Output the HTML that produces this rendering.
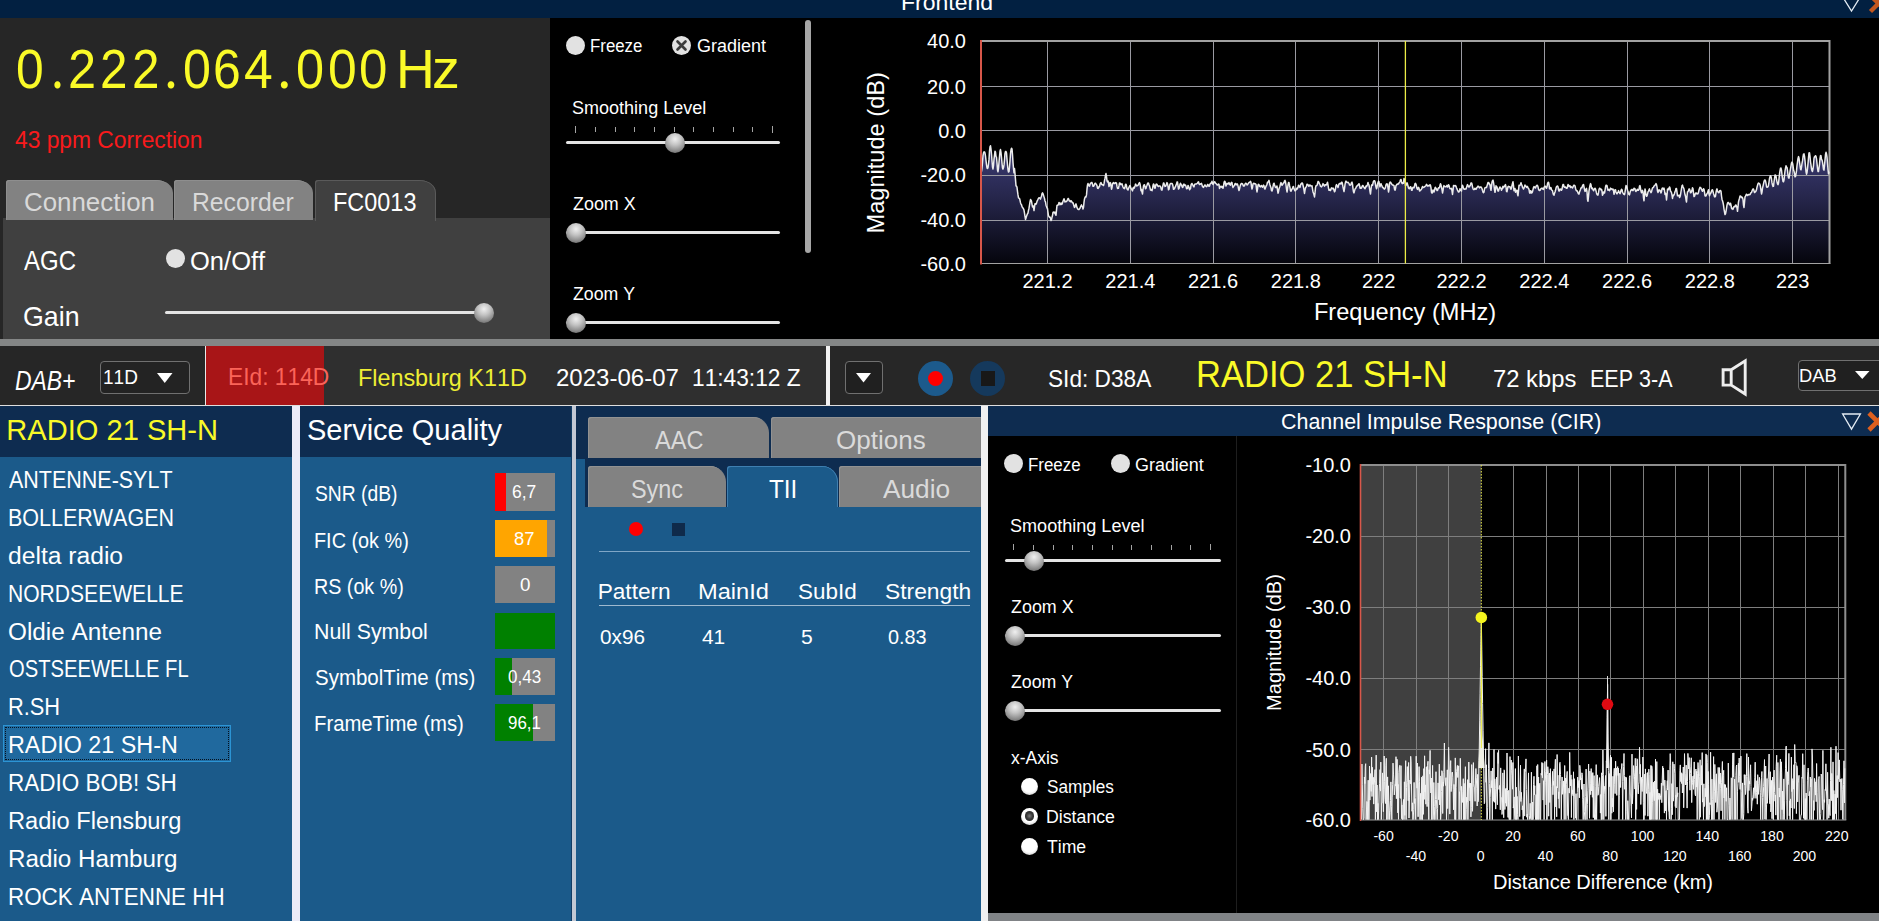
<!DOCTYPE html>
<html lang="en"><head><meta charset="utf-8"><title>DAB+ Receiver</title>
<style>
html,body{margin:0;padding:0;background:#000;}
body{width:1879px;height:921px;overflow:hidden;position:relative;font-family:"Liberation Sans",sans-serif;font-kerning:none;}
#app{position:absolute;left:0;top:0;width:1879px;height:921px;overflow:hidden;background:#000;}
.b{position:absolute;display:block;}
.t{position:absolute;line-height:1;white-space:pre;transform-origin:0 0;font-kerning:none;}
svg text{font-family:"Liberation Sans",sans-serif;font-kerning:none;}
</style></head>
<body><div id="app">
<div class="b " style="left:0.00px;top:0.00px;width:1879.00px;height:18.00px;background:#022041;"></div>
<span class="t " style="left:900.61px;top:-8.00px;font-size:21.80px;color:#fff;transform:scaleX(1.0557);">Frontend</span>
<svg class="b" style="left:1835px;top:0;width:44px;height:18px" viewBox="1835 0 44 18"><polyline points="1844.3,-0.5 1851.5,11 1858.7,-0.5" fill="none" stroke="#e4ecf4" stroke-width="1.3"/><path d="M1869.5,-5.5 L1885.5,10.5 M1870.5,11.5 L1886.5,-4.5" stroke="#c4571f" stroke-width="4.4" fill="none"/></svg>
<div class="b " style="left:0.00px;top:18.00px;width:550.00px;height:321.00px;background:#262626;"></div>
<div class="freq">
<span class="t " style="left:15.56px;top:42.00px;font-size:55.00px;color:#fafa28;transform:scaleX(0.9052);">0</span>
<span class="t " style="left:50.80px;top:37.00px;font-size:61.00px;color:#fafa28;transform:scaleX(0.8463);font-family:'Liberation Serif',serif;">.</span>
<span class="t " style="left:68.46px;top:42.00px;font-size:55.00px;color:#fafa28;transform:scaleX(0.9179);">2</span>
<span class="t " style="left:100.02px;top:42.00px;font-size:55.00px;color:#fafa28;transform:scaleX(0.8980);">2</span>
<span class="t " style="left:131.52px;top:42.00px;font-size:55.00px;color:#fafa28;transform:scaleX(0.8980);">2</span>
<span class="t " style="left:164.02px;top:37.00px;font-size:61.00px;color:#fafa28;transform:scaleX(0.9156);font-family:'Liberation Serif',serif;">.</span>
<span class="t " style="left:183.04px;top:42.00px;font-size:55.00px;color:#fafa28;transform:scaleX(0.9128);">0</span>
<span class="t " style="left:213.47px;top:42.00px;font-size:55.00px;color:#fafa28;transform:scaleX(0.9063);">6</span>
<span class="t " style="left:243.82px;top:42.00px;font-size:55.00px;color:#fafa28;transform:scaleX(0.9381);">4</span>
<span class="t " style="left:277.05px;top:37.00px;font-size:61.00px;color:#fafa28;transform:scaleX(0.9573);font-family:'Liberation Serif',serif;">.</span>
<span class="t " style="left:296.23px;top:42.00px;font-size:55.00px;color:#fafa28;transform:scaleX(0.9166);">0</span>
<span class="t " style="left:328.18px;top:42.00px;font-size:55.00px;color:#fafa28;transform:scaleX(0.9395);">0</span>
<span class="t " style="left:359.41px;top:42.00px;font-size:55.00px;color:#fafa28;transform:scaleX(0.9281);">0</span>
<span class="t " style="left:396.09px;top:42.00px;font-size:55.00px;color:#fafa28;transform:scaleX(0.9765);">H</span>
<span class="t " style="left:432.14px;top:42.00px;font-size:55.00px;color:#fafa28;transform:scaleX(1.0119);">z</span>
</div>
<span class="t " style="left:14.98px;top:129.00px;font-size:23.26px;color:#f81a1c;transform:scaleX(0.9801);">43 ppm Correction</span>
<div class="b " style="left:3.00px;top:218.00px;width:547.00px;height:121.00px;background:#404040;"></div>
<div class="b " style="left:6.00px;top:179.50px;width:166.50px;height:40.50px;background:#828282;border-radius:3px 17px 0 0 / 3px 13px 0 0;box-shadow:inset 1px 1px 0 #8e8e8e;"></div>
<div class="b " style="left:174.00px;top:179.50px;width:138.50px;height:40.50px;background:#828282;border-radius:3px 17px 0 0 / 3px 13px 0 0;box-shadow:inset 1px 1px 0 #8e8e8e;"></div>
<div class="b " style="left:314.50px;top:179.50px;width:121.00px;height:41.50px;background:#404040;border-radius:3px 17px 0 0 / 3px 13px 0 0;box-shadow:inset 1px 1px 0 #5a5a5a, inset -1px 0 0 #5a5a5a;"></div>
<span class="t " style="left:24.44px;top:190.00px;font-size:25.07px;color:#d9d9d9;transform:scaleX(1.0327);">Connection</span>
<span class="t " style="left:192.47px;top:190.00px;font-size:25.07px;color:#d9d9d9;transform:scaleX(0.9861);">Recorder</span>
<span class="t " style="left:332.58px;top:190.00px;font-size:25.07px;color:#fff;transform:scaleX(0.9356);">FC0013</span>
<span class="t " style="left:23.95px;top:246.00px;font-size:28.34px;color:#fff;transform:scaleX(0.8460);">AGC</span>
<div class="b " style="left:165.50px;top:249.25px;width:19.00px;height:19.00px;background:#e2e2e2;border-radius:50%;"></div>
<span class="t " style="left:189.79px;top:249.00px;font-size:25.44px;color:#fff;transform:scaleX(1.0034);">On/Off</span>
<span class="t " style="left:22.65px;top:304.00px;font-size:26.89px;color:#fff;transform:scaleX(0.9963);">Gain</span>
<div class="b " style="left:165.00px;top:310.80px;width:321.00px;height:3.00px;background:#e4e4e4;border-radius:2px;"></div>
<div class="b " style="left:474.30px;top:302.60px;width:20.00px;height:20.00px;background:radial-gradient(circle at 50% 30%, #f0f0f0 0%, #c4c4c4 35%, #8a8a8a 70%, #555 100%);border-radius:50%;"></div>
<div class="b " style="left:566.00px;top:35.50px;width:19.00px;height:19.00px;background:#e2e2e2;border-radius:50%;"></div>
<span class="t " style="left:590.37px;top:37.00px;font-size:18.90px;color:#fff;transform:scaleX(0.8907);">Freeze</span>
<div class="b " style="left:672.25px;top:35.50px;width:19.00px;height:19.00px;background:#e2e2e2;border-radius:50%;"><svg viewBox="-10 -10 20 20" style="position:absolute;left:0;top:0;width:100%;height:100%"><path d="M-4.2,-4.2 L4.2,4.2 M4.2,-4.2 L-4.2,4.2" stroke="#3c3c3c" stroke-width="2.8" stroke-linecap="round"/></svg></div>
<span class="t " style="left:697.34px;top:37.00px;font-size:18.90px;color:#fff;transform:scaleX(0.9526);">Gradient</span>
<span class="t " style="left:572.43px;top:99.00px;font-size:18.90px;color:#fff;transform:scaleX(0.9540);">Smoothing Level</span>
<div class="b " style="left:575.00px;top:126.00px;width:1.00px;height:7.00px;background:#a4a4a4;"></div>
<div class="b " style="left:595.00px;top:127.00px;width:1.00px;height:5.00px;background:#a4a4a4;"></div>
<div class="b " style="left:615.00px;top:127.00px;width:1.00px;height:5.00px;background:#a4a4a4;"></div>
<div class="b " style="left:634.00px;top:127.00px;width:1.00px;height:5.00px;background:#a4a4a4;"></div>
<div class="b " style="left:654.00px;top:127.00px;width:1.00px;height:5.00px;background:#a4a4a4;"></div>
<div class="b " style="left:674.00px;top:127.00px;width:1.00px;height:5.00px;background:#a4a4a4;"></div>
<div class="b " style="left:693.00px;top:127.00px;width:1.00px;height:5.00px;background:#a4a4a4;"></div>
<div class="b " style="left:713.00px;top:127.00px;width:1.00px;height:5.00px;background:#a4a4a4;"></div>
<div class="b " style="left:733.00px;top:127.00px;width:1.00px;height:5.00px;background:#a4a4a4;"></div>
<div class="b " style="left:752.00px;top:127.00px;width:1.00px;height:5.00px;background:#a4a4a4;"></div>
<div class="b " style="left:772.00px;top:126.00px;width:1.00px;height:7.00px;background:#a4a4a4;"></div>
<div class="b " style="left:566.25px;top:141.00px;width:213.25px;height:3.00px;background:#e4e4e4;border-radius:2px;"></div>
<div class="b " style="left:664.50px;top:132.80px;width:20.00px;height:20.00px;background:radial-gradient(circle at 50% 30%, #f0f0f0 0%, #c4c4c4 35%, #8a8a8a 70%, #555 100%);border-radius:50%;"></div>
<span class="t " style="left:572.68px;top:195.00px;font-size:18.90px;color:#fff;transform:scaleX(0.9477);">Zoom X</span>
<div class="b " style="left:566.25px;top:231.00px;width:213.25px;height:3.00px;background:#e4e4e4;border-radius:2px;"></div>
<div class="b " style="left:566.30px;top:222.80px;width:20.00px;height:20.00px;background:radial-gradient(circle at 50% 30%, #f0f0f0 0%, #c4c4c4 35%, #8a8a8a 70%, #555 100%);border-radius:50%;"></div>
<span class="t " style="left:572.69px;top:285.00px;font-size:18.90px;color:#fff;transform:scaleX(0.9388);">Zoom Y</span>
<div class="b " style="left:566.25px;top:321.00px;width:213.25px;height:3.00px;background:#e4e4e4;border-radius:2px;"></div>
<div class="b " style="left:566.30px;top:312.80px;width:20.00px;height:20.00px;background:radial-gradient(circle at 50% 30%, #f0f0f0 0%, #c4c4c4 35%, #8a8a8a 70%, #555 100%);border-radius:50%;"></div>
<div class="b " style="left:804.50px;top:20.00px;width:6.25px;height:233.00px;background:#a6a6a6;border-radius:3px;"></div>
<svg class="b plot" style="left:815px;top:18px;width:1064px;height:321px" viewBox="815 18 1064 321">
<defs><linearGradient id="sg" gradientUnits="userSpaceOnUse" x1="0" y1="150" x2="0" y2="264"><stop offset="0" stop-color="#3c3c74"/><stop offset="0.45" stop-color="#242448"/><stop offset="1" stop-color="#05050c"/></linearGradient></defs>
<polygon points="981,263.5 981.5,171.7 982.0,168.2 982.5,162.3 983.0,155.7 983.5,152.9 984.0,151.8 984.5,151.9 985.0,153.0 985.5,156.0 986.0,160.7 986.5,164.6 987.0,167.9 987.5,168.5 988.0,167.7 988.5,164.0 989.0,159.4 989.5,151.0 990.0,146.9 990.5,145.8 991.0,149.2 991.5,154.3 992.0,160.8 992.5,167.0 993.0,169.0 993.5,165.7 994.0,159.2 994.5,155.1 995.0,151.2 995.5,152.2 996.0,156.6 996.5,157.3 997.0,163.0 997.5,170.1 998.0,171.7 998.5,168.1 999.0,162.3 999.5,156.6 1000.0,151.3 1000.5,149.5 1001.0,152.7 1001.5,157.5 1002.0,163.2 1002.5,168.0 1003.0,169.1 1003.5,167.6 1004.0,164.9 1004.5,159.9 1005.0,153.4 1005.5,151.5 1006.0,151.4 1006.5,152.9 1007.0,159.4 1007.5,164.8 1008.0,169.8 1008.5,172.0 1009.0,171.6 1009.5,167.3 1010.0,161.0 1010.5,153.7 1011.0,149.8 1011.5,148.3 1012.0,148.9 1012.5,154.9 1013.0,162.6 1013.5,168.5 1014.0,172.8 1014.5,168.6 1015.0,173.7 1015.5,179.6 1016.0,185.9 1016.5,185.9 1017.0,187.3 1017.5,191.4 1018.0,194.9 1018.5,197.9 1019.0,198.2 1019.5,198.4 1020.0,200.3 1020.5,202.7 1021.0,204.1 1021.5,204.8 1022.0,206.6 1022.5,207.5 1023.0,208.1 1023.5,208.9 1024.0,210.1 1024.5,213.2 1025.0,216.5 1025.5,219.4 1026.0,217.9 1026.5,216.3 1027.0,214.9 1027.5,213.7 1028.0,213.0 1028.5,210.2 1029.0,208.2 1029.5,205.0 1030.0,201.8 1030.5,199.6 1031.0,200.2 1031.5,201.2 1032.0,204.3 1032.5,206.9 1033.0,205.8 1033.5,207.2 1034.0,210.6 1034.5,207.0 1035.0,203.7 1035.5,203.7 1036.0,204.2 1036.5,203.2 1037.0,201.4 1037.5,200.3 1038.0,199.3 1038.5,198.2 1039.0,197.7 1039.5,198.0 1040.0,198.3 1040.5,199.1 1041.0,197.4 1041.5,196.4 1042.0,193.6 1042.5,192.8 1043.0,193.6 1043.5,195.3 1044.0,196.9 1044.5,198.5 1045.0,201.0 1045.5,201.9 1046.0,205.2 1046.5,206.5 1047.0,208.0 1047.5,208.6 1048.0,212.4 1048.5,215.8 1049.0,216.5 1049.5,217.2 1050.0,217.0 1050.5,218.3 1051.0,220.5 1051.5,219.7 1052.0,217.3 1052.5,215.5 1053.0,212.4 1053.5,212.0 1054.0,212.2 1054.5,213.0 1055.0,212.1 1055.5,214.7 1056.0,215.2 1056.5,210.1 1057.0,205.4 1057.5,205.2 1058.0,205.2 1058.5,203.9 1059.0,202.5 1059.5,203.0 1060.0,204.7 1060.5,204.2 1061.0,202.9 1061.5,204.4 1062.0,204.1 1062.5,202.9 1063.0,201.3 1063.5,199.9 1064.0,198.8 1064.5,200.4 1065.0,201.9 1065.5,201.5 1066.0,201.8 1066.5,201.2 1067.0,201.1 1067.5,199.8 1068.0,198.6 1068.5,198.6 1069.0,200.2 1069.5,201.1 1070.0,201.0 1070.5,201.7 1071.0,200.6 1071.5,201.3 1072.0,202.1 1072.5,202.7 1073.0,202.8 1073.5,204.4 1074.0,206.0 1074.5,207.4 1075.0,206.8 1075.5,204.9 1076.0,203.9 1076.5,205.7 1077.0,207.7 1077.5,208.3 1078.0,209.4 1078.5,209.6 1079.0,209.6 1079.5,208.9 1080.0,208.2 1080.5,206.8 1081.0,205.8 1081.5,204.9 1082.0,206.3 1082.5,206.9 1083.0,209.0 1083.5,207.3 1084.0,202.4 1084.5,198.9 1085.0,197.5 1085.5,196.7 1086.0,196.9 1086.5,194.9 1087.0,189.2 1087.5,184.9 1088.0,183.4 1088.5,184.9 1089.0,185.9 1089.5,186.2 1090.0,184.5 1090.5,183.2 1091.0,183.1 1091.5,182.5 1092.0,182.6 1092.5,184.4 1093.0,186.3 1093.5,186.3 1094.0,185.8 1094.5,184.1 1095.0,183.3 1095.5,183.2 1096.0,184.0 1096.5,184.7 1097.0,185.7 1097.5,188.2 1098.0,188.4 1098.5,187.9 1099.0,186.5 1099.5,186.7 1100.0,184.1 1100.5,183.0 1101.0,182.6 1101.5,184.1 1102.0,184.6 1102.5,184.6 1103.0,185.2 1103.5,185.5 1104.0,183.9 1104.5,180.7 1105.0,178.4 1105.5,175.4 1106.0,173.5 1106.5,176.7 1107.0,180.8 1107.5,182.0 1108.0,181.0 1108.5,183.2 1109.0,186.6 1109.5,185.2 1110.0,182.6 1110.5,182.9 1111.0,185.6 1111.5,189.2 1112.0,187.5 1112.5,184.0 1113.0,183.2 1113.5,182.5 1114.0,183.5 1114.5,183.3 1115.0,183.4 1115.5,182.6 1116.0,182.8 1116.5,183.2 1117.0,186.4 1117.5,188.4 1118.0,187.9 1118.5,188.1 1119.0,185.7 1119.5,183.0 1120.0,183.1 1120.5,184.6 1121.0,184.1 1121.5,184.4 1122.0,183.9 1122.5,185.5 1123.0,187.0 1123.5,188.0 1124.0,188.4 1124.5,188.7 1125.0,187.3 1125.5,184.4 1126.0,184.2 1126.5,185.8 1127.0,188.9 1127.5,189.6 1128.0,190.0 1128.5,188.5 1129.0,187.3 1129.5,186.2 1130.0,185.6 1130.5,186.8 1131.0,188.5 1131.5,189.0 1132.0,190.0 1132.5,190.9 1133.0,188.2 1133.5,187.4 1134.0,188.4 1134.5,187.5 1135.0,185.9 1135.5,184.1 1136.0,184.7 1136.5,185.9 1137.0,185.9 1137.5,185.5 1138.0,185.6 1138.5,184.3 1139.0,183.3 1139.5,182.6 1140.0,183.9 1140.5,186.9 1141.0,190.7 1141.5,189.5 1142.0,192.1 1142.5,194.0 1143.0,189.5 1143.5,185.9 1144.0,184.9 1144.5,184.7 1145.0,186.8 1145.5,188.8 1146.0,188.3 1146.5,186.3 1147.0,185.2 1147.5,183.7 1148.0,182.9 1148.5,183.1 1149.0,184.8 1149.5,185.9 1150.0,187.8 1150.5,190.1 1151.0,189.4 1151.5,190.4 1152.0,190.6 1152.5,188.7 1153.0,185.5 1153.5,183.9 1154.0,184.6 1154.5,187.7 1155.0,188.3 1155.5,186.5 1156.0,184.4 1156.5,184.0 1157.0,184.4 1157.5,185.5 1158.0,186.2 1158.5,186.5 1159.0,186.0 1159.5,186.0 1160.0,186.1 1160.5,186.4 1161.0,188.2 1161.5,190.0 1162.0,190.1 1162.5,187.4 1163.0,185.2 1163.5,182.9 1164.0,183.4 1164.5,185.0 1165.0,186.4 1165.5,186.2 1166.0,185.5 1166.5,183.9 1167.0,182.6 1167.5,183.5 1168.0,186.5 1168.5,189.8 1169.0,189.3 1169.5,186.3 1170.0,184.3 1170.5,183.6 1171.0,183.5 1171.5,183.5 1172.0,183.4 1172.5,184.3 1173.0,186.3 1173.5,189.3 1174.0,189.1 1174.5,188.7 1175.0,187.3 1175.5,186.5 1176.0,185.1 1176.5,184.1 1177.0,182.1 1177.5,182.0 1178.0,185.6 1178.5,189.1 1179.0,188.5 1179.5,186.8 1180.0,184.4 1180.5,183.2 1181.0,184.6 1181.5,185.1 1182.0,186.5 1182.5,187.5 1183.0,186.9 1183.5,184.4 1184.0,184.1 1184.5,185.4 1185.0,185.2 1185.5,185.0 1186.0,186.4 1186.5,188.7 1187.0,188.7 1187.5,188.3 1188.0,185.4 1188.5,186.2 1189.0,187.6 1189.5,189.7 1190.0,189.0 1190.5,188.7 1191.0,185.1 1191.5,183.8 1192.0,183.5 1192.5,184.8 1193.0,185.3 1193.5,186.5 1194.0,186.9 1194.5,184.7 1195.0,184.1 1195.5,183.9 1196.0,183.9 1196.5,183.9 1197.0,183.5 1197.5,183.1 1198.0,182.1 1198.5,181.8 1199.0,183.7 1199.5,184.6 1200.0,184.4 1200.5,183.9 1201.0,183.6 1201.5,183.4 1202.0,184.9 1202.5,186.6 1203.0,187.0 1203.5,187.4 1204.0,186.1 1204.5,185.8 1205.0,184.9 1205.5,185.7 1206.0,186.4 1206.5,186.7 1207.0,186.2 1207.5,184.6 1208.0,184.5 1208.5,185.8 1209.0,186.2 1209.5,186.0 1210.0,184.0 1210.5,183.6 1211.0,183.1 1211.5,182.7 1212.0,181.3 1212.5,183.5 1213.0,184.5 1213.5,183.6 1214.0,182.3 1214.5,181.8 1215.0,181.9 1215.5,183.2 1216.0,183.6 1216.5,183.9 1217.0,184.8 1217.5,185.1 1218.0,184.9 1218.5,184.0 1219.0,184.4 1219.5,188.4 1220.0,187.5 1220.5,186.5 1221.0,186.3 1221.5,187.1 1222.0,186.3 1222.5,187.8 1223.0,188.3 1223.5,186.3 1224.0,182.8 1224.5,181.3 1225.0,181.4 1225.5,184.2 1226.0,186.1 1226.5,184.6 1227.0,183.2 1227.5,184.1 1228.0,183.9 1228.5,183.3 1229.0,182.6 1229.5,184.5 1230.0,184.1 1230.5,185.2 1231.0,183.1 1231.5,182.3 1232.0,182.6 1232.5,186.0 1233.0,187.5 1233.5,186.5 1234.0,185.9 1234.5,185.5 1235.0,183.6 1235.5,183.4 1236.0,184.5 1236.5,184.7 1237.0,184.0 1237.5,184.1 1238.0,185.9 1238.5,188.7 1239.0,190.6 1239.5,189.0 1240.0,186.6 1240.5,185.1 1241.0,183.8 1241.5,183.5 1242.0,183.5 1242.5,183.9 1243.0,184.9 1243.5,186.1 1244.0,186.0 1244.5,185.8 1245.0,184.1 1245.5,183.3 1246.0,183.2 1246.5,183.9 1247.0,184.9 1247.5,184.8 1248.0,183.9 1248.5,183.2 1249.0,182.6 1249.5,182.2 1250.0,182.1 1250.5,181.4 1251.0,182.6 1251.5,186.7 1252.0,189.1 1252.5,187.2 1253.0,184.0 1253.5,183.4 1254.0,183.2 1254.5,183.9 1255.0,183.7 1255.5,184.0 1256.0,184.4 1256.5,188.9 1257.0,191.9 1257.5,189.1 1258.0,184.9 1258.5,184.3 1259.0,184.6 1259.5,186.3 1260.0,186.6 1260.5,186.9 1261.0,185.7 1261.5,185.5 1262.0,186.6 1262.5,187.2 1263.0,186.2 1263.5,185.1 1264.0,185.8 1264.5,188.3 1265.0,189.1 1265.5,187.8 1266.0,186.1 1266.5,185.6 1267.0,184.2 1267.5,182.2 1268.0,182.0 1268.5,181.4 1269.0,180.4 1269.5,183.1 1270.0,185.0 1270.5,186.4 1271.0,187.8 1271.5,190.6 1272.0,191.0 1272.5,189.5 1273.0,186.6 1273.5,183.9 1274.0,183.2 1274.5,184.8 1275.0,186.2 1275.5,187.5 1276.0,187.6 1276.5,186.6 1277.0,186.1 1277.5,189.8 1278.0,193.2 1278.5,191.7 1279.0,188.8 1279.5,187.5 1280.0,186.2 1280.5,183.8 1281.0,182.6 1281.5,183.8 1282.0,185.3 1282.5,184.7 1283.0,183.9 1283.5,182.7 1284.0,182.8 1284.5,181.0 1285.0,180.4 1285.5,181.8 1286.0,185.0 1286.5,189.0 1287.0,192.0 1287.5,189.3 1288.0,184.8 1288.5,182.6 1289.0,182.6 1289.5,185.4 1290.0,187.6 1290.5,190.8 1291.0,191.3 1291.5,190.0 1292.0,189.2 1292.5,188.0 1293.0,186.7 1293.5,186.6 1294.0,188.8 1294.5,189.9 1295.0,190.8 1295.5,190.8 1296.0,189.6 1296.5,188.2 1297.0,189.2 1297.5,188.5 1298.0,187.3 1298.5,185.2 1299.0,186.0 1299.5,187.0 1300.0,187.4 1300.5,185.1 1301.0,183.8 1301.5,184.0 1302.0,182.9 1302.5,183.3 1303.0,185.3 1303.5,187.2 1304.0,190.1 1304.5,193.5 1305.0,190.2 1305.5,187.9 1306.0,187.1 1306.5,186.0 1307.0,184.2 1307.5,184.4 1308.0,184.7 1308.5,185.9 1309.0,186.3 1309.5,185.2 1310.0,185.0 1310.5,185.7 1311.0,186.0 1311.5,185.9 1312.0,185.8 1312.5,188.8 1313.0,192.0 1313.5,193.1 1314.0,194.9 1314.5,196.9 1315.0,192.9 1315.5,187.6 1316.0,185.7 1316.5,185.7 1317.0,185.4 1317.5,183.8 1318.0,181.6 1318.5,181.5 1319.0,182.6 1319.5,183.9 1320.0,184.6 1320.5,186.3 1321.0,186.5 1321.5,186.9 1322.0,186.1 1322.5,185.2 1323.0,183.6 1323.5,184.4 1324.0,185.4 1324.5,186.2 1325.0,184.9 1325.5,184.7 1326.0,185.1 1326.5,184.9 1327.0,183.5 1327.5,182.2 1328.0,184.9 1328.5,188.4 1329.0,190.3 1329.5,189.5 1330.0,190.4 1330.5,190.4 1331.0,188.9 1331.5,187.9 1332.0,188.5 1332.5,188.7 1333.0,188.1 1333.5,188.7 1334.0,190.2 1334.5,191.8 1335.0,191.1 1335.5,188.6 1336.0,185.7 1336.5,184.6 1337.0,185.8 1337.5,186.3 1338.0,187.6 1338.5,185.5 1339.0,184.0 1339.5,183.5 1340.0,183.8 1340.5,183.4 1341.0,184.0 1341.5,182.2 1342.0,182.3 1342.5,184.0 1343.0,187.1 1343.5,189.3 1344.0,191.5 1344.5,188.6 1345.0,184.7 1345.5,182.1 1346.0,181.1 1346.5,181.9 1347.0,182.5 1347.5,182.4 1348.0,182.2 1348.5,183.0 1349.0,183.4 1349.5,185.1 1350.0,184.8 1350.5,185.1 1351.0,184.3 1351.5,182.8 1352.0,182.1 1352.5,184.1 1353.0,188.6 1353.5,191.9 1354.0,192.9 1354.5,190.9 1355.0,189.1 1355.5,188.3 1356.0,187.9 1356.5,186.3 1357.0,186.2 1357.5,185.3 1358.0,185.2 1358.5,184.3 1359.0,183.7 1359.5,185.2 1360.0,188.0 1360.5,188.3 1361.0,187.5 1361.5,188.1 1362.0,186.8 1362.5,185.5 1363.0,185.5 1363.5,186.8 1364.0,187.2 1364.5,188.3 1365.0,188.7 1365.5,187.6 1366.0,185.9 1366.5,186.7 1367.0,185.7 1367.5,184.5 1368.0,182.5 1368.5,184.0 1369.0,185.2 1369.5,188.2 1370.0,191.5 1370.5,194.0 1371.0,189.4 1371.5,185.7 1372.0,184.7 1372.5,185.3 1373.0,183.2 1373.5,181.3 1374.0,180.8 1374.5,180.7 1375.0,181.7 1375.5,184.5 1376.0,187.0 1376.5,188.7 1377.0,187.4 1377.5,184.2 1378.0,182.5 1378.5,181.3 1379.0,181.8 1379.5,185.3 1380.0,186.9 1380.5,184.3 1381.0,183.7 1381.5,185.3 1382.0,186.0 1382.5,187.4 1383.0,187.3 1383.5,188.2 1384.0,188.8 1384.5,189.1 1385.0,188.5 1385.5,187.0 1386.0,184.8 1386.5,183.9 1387.0,184.6 1387.5,184.1 1388.0,188.0 1388.5,192.0 1389.0,189.5 1389.5,183.6 1390.0,182.3 1390.5,182.1 1391.0,183.0 1391.5,183.8 1392.0,184.4 1392.5,185.0 1393.0,185.0 1393.5,185.3 1394.0,185.7 1394.5,189.1 1395.0,190.2 1395.5,188.7 1396.0,185.6 1396.5,185.2 1397.0,184.2 1397.5,184.2 1398.0,183.7 1398.5,184.0 1399.0,182.8 1399.5,182.5 1400.0,181.5 1400.5,179.8 1401.0,179.5 1401.5,181.5 1402.0,183.3 1402.5,183.6 1403.0,182.6 1403.5,183.2 1404.0,178.5 1404.5,179.7 1405.0,179.4 1405.5,185.8 1406.0,185.4 1406.5,184.5 1407.0,182.8 1407.5,184.1 1408.0,186.0 1408.5,188.2 1409.0,188.5 1409.5,188.7 1410.0,187.3 1410.5,186.7 1411.0,187.3 1411.5,190.2 1412.0,190.2 1412.5,188.2 1413.0,187.3 1413.5,187.4 1414.0,187.8 1414.5,186.1 1415.0,183.7 1415.5,183.4 1416.0,184.3 1416.5,186.3 1417.0,188.5 1417.5,189.4 1418.0,188.1 1418.5,187.3 1419.0,188.2 1419.5,190.9 1420.0,190.8 1420.5,189.9 1421.0,189.9 1421.5,189.1 1422.0,187.7 1422.5,186.5 1423.0,187.6 1423.5,187.2 1424.0,187.3 1424.5,186.7 1425.0,186.5 1425.5,186.0 1426.0,185.4 1426.5,184.4 1427.0,185.2 1427.5,186.0 1428.0,185.5 1428.5,185.7 1429.0,186.0 1429.5,185.3 1430.0,184.7 1430.5,185.5 1431.0,187.9 1431.5,192.4 1432.0,193.1 1432.5,192.0 1433.0,190.0 1433.5,190.5 1434.0,192.0 1434.5,190.3 1435.0,187.8 1435.5,187.3 1436.0,188.9 1436.5,188.8 1437.0,190.6 1437.5,190.5 1438.0,189.1 1438.5,187.7 1439.0,188.0 1439.5,187.7 1440.0,185.3 1440.5,183.7 1441.0,185.1 1441.5,187.3 1442.0,189.7 1442.5,193.0 1443.0,190.6 1443.5,187.1 1444.0,185.6 1444.5,186.4 1445.0,186.4 1445.5,186.8 1446.0,186.7 1446.5,186.3 1447.0,185.3 1447.5,187.0 1448.0,186.4 1448.5,184.8 1449.0,185.5 1449.5,187.5 1450.0,188.7 1450.5,188.7 1451.0,188.6 1451.5,188.3 1452.0,190.9 1452.5,194.4 1453.0,190.4 1453.5,185.5 1454.0,185.5 1454.5,185.8 1455.0,185.9 1455.5,185.5 1456.0,186.3 1456.5,187.7 1457.0,188.9 1457.5,190.1 1458.0,191.2 1458.5,192.1 1459.0,191.9 1459.5,190.7 1460.0,188.7 1460.5,189.6 1461.0,190.7 1461.5,191.0 1462.0,187.1 1462.5,185.3 1463.0,186.5 1463.5,188.0 1464.0,189.3 1464.5,189.3 1465.0,189.0 1465.5,188.9 1466.0,189.0 1466.5,187.5 1467.0,186.0 1467.5,184.6 1468.0,186.0 1468.5,186.1 1469.0,187.1 1469.5,185.9 1470.0,186.0 1470.5,184.8 1471.0,183.0 1471.5,182.9 1472.0,184.0 1472.5,187.0 1473.0,188.5 1473.5,189.6 1474.0,189.6 1474.5,189.1 1475.0,188.2 1475.5,189.3 1476.0,189.3 1476.5,188.5 1477.0,187.3 1477.5,187.0 1478.0,186.1 1478.5,186.6 1479.0,187.1 1479.5,187.9 1480.0,187.1 1480.5,187.2 1481.0,187.0 1481.5,187.7 1482.0,188.6 1482.5,190.5 1483.0,192.1 1483.5,192.6 1484.0,192.2 1484.5,189.0 1485.0,187.7 1485.5,187.5 1486.0,187.5 1486.5,187.5 1487.0,185.9 1487.5,184.2 1488.0,182.5 1488.5,182.5 1489.0,183.0 1489.5,184.6 1490.0,184.3 1490.5,188.3 1491.0,190.3 1491.5,186.3 1492.0,182.0 1492.5,180.8 1493.0,180.1 1493.5,182.5 1494.0,185.6 1494.5,189.9 1495.0,192.3 1495.5,189.5 1496.0,185.7 1496.5,186.8 1497.0,187.0 1497.5,189.6 1498.0,191.0 1498.5,191.0 1499.0,189.0 1499.5,187.8 1500.0,187.0 1500.5,188.1 1501.0,188.4 1501.5,190.2 1502.0,189.2 1502.5,187.5 1503.0,186.2 1503.5,187.7 1504.0,186.7 1504.5,186.3 1505.0,185.3 1505.5,184.6 1506.0,187.1 1506.5,191.3 1507.0,191.7 1507.5,189.0 1508.0,186.6 1508.5,186.3 1509.0,186.8 1509.5,186.8 1510.0,186.7 1510.5,188.6 1511.0,189.2 1511.5,188.0 1512.0,185.5 1512.5,183.5 1513.0,181.8 1513.5,185.7 1514.0,190.7 1514.5,189.8 1515.0,188.5 1515.5,192.2 1516.0,191.6 1516.5,190.2 1517.0,190.2 1517.5,194.1 1518.0,195.8 1518.5,190.6 1519.0,185.2 1519.5,185.4 1520.0,185.4 1520.5,184.5 1521.0,182.8 1521.5,184.7 1522.0,185.3 1522.5,187.4 1523.0,188.2 1523.5,189.0 1524.0,188.1 1524.5,186.5 1525.0,185.0 1525.5,186.0 1526.0,186.3 1526.5,187.4 1527.0,186.3 1527.5,186.6 1528.0,188.0 1528.5,188.4 1529.0,189.4 1529.5,192.5 1530.0,193.2 1530.5,190.8 1531.0,191.0 1531.5,193.0 1532.0,192.8 1532.5,191.6 1533.0,189.6 1533.5,187.5 1534.0,186.6 1534.5,187.1 1535.0,187.8 1535.5,187.9 1536.0,186.4 1536.5,185.8 1537.0,185.2 1537.5,185.6 1538.0,186.8 1538.5,189.1 1539.0,190.2 1539.5,190.6 1540.0,190.4 1540.5,189.4 1541.0,188.5 1541.5,188.5 1542.0,188.1 1542.5,188.6 1543.0,189.2 1543.5,189.4 1544.0,187.4 1544.5,186.7 1545.0,186.2 1545.5,186.3 1546.0,187.7 1546.5,188.2 1547.0,186.8 1547.5,183.8 1548.0,182.4 1548.5,182.2 1549.0,184.5 1549.5,188.6 1550.0,189.0 1550.5,187.6 1551.0,187.7 1551.5,189.6 1552.0,190.4 1552.5,190.7 1553.0,193.1 1553.5,194.9 1554.0,195.1 1554.5,193.3 1555.0,192.0 1555.5,190.3 1556.0,188.1 1556.5,186.8 1557.0,186.2 1557.5,186.1 1558.0,186.7 1558.5,189.7 1559.0,191.1 1559.5,190.8 1560.0,188.9 1560.5,189.1 1561.0,189.3 1561.5,190.3 1562.0,189.1 1562.5,186.5 1563.0,184.5 1563.5,184.4 1564.0,186.5 1564.5,187.3 1565.0,186.9 1565.5,187.0 1566.0,187.9 1566.5,188.3 1567.0,188.3 1567.5,186.5 1568.0,184.6 1568.5,185.1 1569.0,186.4 1569.5,185.9 1570.0,185.8 1570.5,187.5 1571.0,186.6 1571.5,187.0 1572.0,187.4 1572.5,187.9 1573.0,186.9 1573.5,185.8 1574.0,185.1 1574.5,185.5 1575.0,185.9 1575.5,188.2 1576.0,190.0 1576.5,190.7 1577.0,190.8 1577.5,191.5 1578.0,193.0 1578.5,193.9 1579.0,194.0 1579.5,192.1 1580.0,190.7 1580.5,189.5 1581.0,188.1 1581.5,187.4 1582.0,187.6 1582.5,185.8 1583.0,184.9 1583.5,184.5 1584.0,186.9 1584.5,189.6 1585.0,191.4 1585.5,191.0 1586.0,189.2 1586.5,188.3 1587.0,191.5 1587.5,199.5 1588.0,201.3 1588.5,196.2 1589.0,190.9 1589.5,187.8 1590.0,185.4 1590.5,183.6 1591.0,184.8 1591.5,188.0 1592.0,188.7 1592.5,188.1 1593.0,189.7 1593.5,190.8 1594.0,189.8 1594.5,188.7 1595.0,188.3 1595.5,189.0 1596.0,190.9 1596.5,192.9 1597.0,194.4 1597.5,195.1 1598.0,195.1 1598.5,192.7 1599.0,189.5 1599.5,188.2 1600.0,188.5 1600.5,189.0 1601.0,190.0 1601.5,189.3 1602.0,191.2 1602.5,195.3 1603.0,194.1 1603.5,192.0 1604.0,193.1 1604.5,193.1 1605.0,190.5 1605.5,187.0 1606.0,185.2 1606.5,185.3 1607.0,185.7 1607.5,188.5 1608.0,190.2 1608.5,189.3 1609.0,189.6 1609.5,190.7 1610.0,189.8 1610.5,188.1 1611.0,189.0 1611.5,188.8 1612.0,189.3 1612.5,189.7 1613.0,189.0 1613.5,190.4 1614.0,194.2 1614.5,192.2 1615.0,189.7 1615.5,189.7 1616.0,192.0 1616.5,193.1 1617.0,193.9 1617.5,192.7 1618.0,192.4 1618.5,190.6 1619.0,191.9 1619.5,192.9 1620.0,193.6 1620.5,192.6 1621.0,190.3 1621.5,189.2 1622.0,189.8 1622.5,191.7 1623.0,193.1 1623.5,193.9 1624.0,194.4 1624.5,194.7 1625.0,192.2 1625.5,188.6 1626.0,185.6 1626.5,186.0 1627.0,187.7 1627.5,190.2 1628.0,191.3 1628.5,194.0 1629.0,194.5 1629.5,194.9 1630.0,192.6 1630.5,191.1 1631.0,190.2 1631.5,189.6 1632.0,189.3 1632.5,190.4 1633.0,190.7 1633.5,189.7 1634.0,188.2 1634.5,188.6 1635.0,188.8 1635.5,190.9 1636.0,191.4 1636.5,190.5 1637.0,189.9 1637.5,189.3 1638.0,190.4 1638.5,190.2 1639.0,189.4 1639.5,186.0 1640.0,185.6 1640.5,188.5 1641.0,191.1 1641.5,192.8 1642.0,191.1 1642.5,190.4 1643.0,191.8 1643.5,197.9 1644.0,200.8 1644.5,194.6 1645.0,189.0 1645.5,191.0 1646.0,194.8 1646.5,196.2 1647.0,196.1 1647.5,194.1 1648.0,191.9 1648.5,191.0 1649.0,189.9 1649.5,188.9 1650.0,190.9 1650.5,191.7 1651.0,192.7 1651.5,191.9 1652.0,189.7 1652.5,187.9 1653.0,187.7 1653.5,187.2 1654.0,185.9 1654.5,185.8 1655.0,185.2 1655.5,184.4 1656.0,183.6 1656.5,184.6 1657.0,186.8 1657.5,191.1 1658.0,192.5 1658.5,191.3 1659.0,189.8 1659.5,190.8 1660.0,190.3 1660.5,191.6 1661.0,192.9 1661.5,191.6 1662.0,188.7 1662.5,188.0 1663.0,188.6 1663.5,189.2 1664.0,188.1 1664.5,190.5 1665.0,194.5 1665.5,193.1 1666.0,195.2 1666.5,199.9 1667.0,195.2 1667.5,189.1 1668.0,188.9 1668.5,189.7 1669.0,188.1 1669.5,187.0 1670.0,187.8 1670.5,191.1 1671.0,191.7 1671.5,192.6 1672.0,195.1 1672.5,198.4 1673.0,195.3 1673.5,195.7 1674.0,194.9 1674.5,193.5 1675.0,191.6 1675.5,190.6 1676.0,188.5 1676.5,188.5 1677.0,192.1 1677.5,195.8 1678.0,195.4 1678.5,195.8 1679.0,195.2 1679.5,197.4 1680.0,196.8 1680.5,194.8 1681.0,191.5 1681.5,188.6 1682.0,185.8 1682.5,185.1 1683.0,186.7 1683.5,187.8 1684.0,189.0 1684.5,192.0 1685.0,194.8 1685.5,196.3 1686.0,199.5 1686.5,202.0 1687.0,196.3 1687.5,191.7 1688.0,191.7 1688.5,190.4 1689.0,189.1 1689.5,189.0 1690.0,190.4 1690.5,192.8 1691.0,192.8 1691.5,191.7 1692.0,190.3 1692.5,187.7 1693.0,188.9 1693.5,192.8 1694.0,196.6 1694.5,196.2 1695.0,194.7 1695.5,193.3 1696.0,192.9 1696.5,193.2 1697.0,194.1 1697.5,193.9 1698.0,193.7 1698.5,192.3 1699.0,190.0 1699.5,188.6 1700.0,187.3 1700.5,187.8 1701.0,188.0 1701.5,189.4 1702.0,190.5 1702.5,191.3 1703.0,189.9 1703.5,188.7 1704.0,189.5 1704.5,192.1 1705.0,195.6 1705.5,196.1 1706.0,195.9 1706.5,194.5 1707.0,193.7 1707.5,192.9 1708.0,191.3 1708.5,189.7 1709.0,193.8 1709.5,195.7 1710.0,194.1 1710.5,193.7 1711.0,192.7 1711.5,191.0 1712.0,190.0 1712.5,189.8 1713.0,191.5 1713.5,193.4 1714.0,194.9 1714.5,196.8 1715.0,196.9 1715.5,196.1 1716.0,192.5 1716.5,190.0 1717.0,188.9 1717.5,191.0 1718.0,192.0 1718.5,192.6 1719.0,192.8 1719.5,191.0 1720.0,190.7 1720.5,190.5 1721.0,191.3 1721.5,196.0 1722.0,199.4 1722.5,200.8 1723.0,202.5 1723.5,205.2 1724.0,209.1 1724.5,211.8 1725.0,214.6 1725.5,213.9 1726.0,211.3 1726.5,208.3 1727.0,205.2 1727.5,203.1 1728.0,202.4 1728.5,202.5 1729.0,203.8 1729.5,204.7 1730.0,204.9 1730.5,203.2 1731.0,205.2 1731.5,208.1 1732.0,209.0 1732.5,208.2 1733.0,209.4 1733.5,207.7 1734.0,206.5 1734.5,206.5 1735.0,206.8 1735.5,205.2 1736.0,205.0 1736.5,206.2 1737.0,207.9 1737.5,211.3 1738.0,207.0 1738.5,201.9 1739.0,199.9 1739.5,198.2 1740.0,196.1 1740.5,196.1 1741.0,196.4 1741.5,197.6 1742.0,197.2 1742.5,197.6 1743.0,199.4 1743.5,205.2 1744.0,207.5 1744.5,202.4 1745.0,196.9 1745.5,196.2 1746.0,195.2 1746.5,194.2 1747.0,194.9 1747.5,195.4 1748.0,194.8 1748.5,194.5 1749.0,194.9 1749.5,194.6 1750.0,194.6 1750.5,193.4 1751.0,192.6 1751.5,192.6 1752.0,191.1 1752.5,189.8 1753.0,189.0 1753.5,189.1 1754.0,190.7 1754.5,192.6 1755.0,192.1 1755.5,191.7 1756.0,191.0 1756.5,189.8 1757.0,187.2 1757.5,185.4 1758.0,183.7 1758.5,183.1 1759.0,183.6 1759.5,183.6 1760.0,184.8 1760.5,186.8 1761.0,190.5 1761.5,194.0 1762.0,192.1 1762.5,188.1 1763.0,186.1 1763.5,183.8 1764.0,181.6 1764.5,180.2 1765.0,180.0 1765.5,180.8 1766.0,183.3 1766.5,186.5 1767.0,187.3 1767.5,187.0 1768.0,186.8 1768.5,185.2 1769.0,182.1 1769.5,178.5 1770.0,176.6 1770.5,175.7 1771.0,176.6 1771.5,179.0 1772.0,182.9 1772.5,185.0 1773.0,186.4 1773.5,186.2 1774.0,182.0 1774.5,178.6 1775.0,175.1 1775.5,175.1 1776.0,175.9 1776.5,179.5 1777.0,181.8 1777.5,183.9 1778.0,184.7 1778.5,183.1 1779.0,178.8 1779.5,174.1 1780.0,170.7 1780.5,168.2 1781.0,168.1 1781.5,170.2 1782.0,174.8 1782.5,178.3 1783.0,181.4 1783.5,181.8 1784.0,180.1 1784.5,175.2 1785.0,171.2 1785.5,168.1 1786.0,165.8 1786.5,167.0 1787.0,167.5 1787.5,170.3 1788.0,175.1 1788.5,177.8 1789.0,178.1 1789.5,175.3 1790.0,171.6 1790.5,168.7 1791.0,165.9 1791.5,163.0 1792.0,162.1 1792.5,163.0 1793.0,165.5 1793.5,169.6 1794.0,171.2 1794.5,173.7 1795.0,176.8 1795.5,176.6 1796.0,173.8 1796.5,170.9 1797.0,165.5 1797.5,162.1 1798.0,158.4 1798.5,156.6 1799.0,158.0 1799.5,162.1 1800.0,165.5 1800.5,169.0 1801.0,169.8 1801.5,167.2 1802.0,163.5 1802.5,160.9 1803.0,157.0 1803.5,154.1 1804.0,153.9 1804.5,156.2 1805.0,160.7 1805.5,166.2 1806.0,171.6 1806.5,174.2 1807.0,172.6 1807.5,168.6 1808.0,163.7 1808.5,157.7 1809.0,152.9 1809.5,152.7 1810.0,156.3 1810.5,161.8 1811.0,165.0 1811.5,168.8 1812.0,170.8 1812.5,171.4 1813.0,168.8 1813.5,165.3 1814.0,158.3 1814.5,156.8 1815.0,156.7 1815.5,155.7 1816.0,156.5 1816.5,158.9 1817.0,163.3 1817.5,168.2 1818.0,171.4 1818.5,171.5 1819.0,167.9 1819.5,164.3 1820.0,158.6 1820.5,155.6 1821.0,155.8 1821.5,159.5 1822.0,159.8 1822.5,162.2 1823.0,165.7 1823.5,169.3 1824.0,170.1 1824.5,165.3 1825.0,160.1 1825.5,154.5 1826.0,152.3 1826.5,153.9 1827.0,157.1 1827.5,163.1 1828.0,169.3 1828.5,173.8 1829.0,171.7 1829.5,263.5" fill="url(#sg)"/>
<path d="M1047.5,41 V263.5 M1130.5,41 V263.5 M1213.5,41 V263.5 M1295.5,41 V263.5 M1378.5,41 V263.5 M1461.5,41 V263.5 M1544.5,41 V263.5 M1627.5,41 V263.5 M1709.5,41 V263.5 M1792.5,41 V263.5 M981,86.5 H1829.5 M981,130.5 H1829.5 M981,175.5 H1829.5 M981,220.5 H1829.5" stroke="#9a9aa2" stroke-width="1" fill="none"/>
<path d="M981,41 H1829.5 V263.5" fill="none" stroke="#a2a2a2" stroke-width="2"/><path d="M981,263.5 H1830.5" fill="none" stroke="#a2a2a2" stroke-width="1"/>
<polyline points="981.5,171.7 982.0,168.2 982.5,162.3 983.0,155.7 983.5,152.9 984.0,151.8 984.5,151.9 985.0,153.0 985.5,156.0 986.0,160.7 986.5,164.6 987.0,167.9 987.5,168.5 988.0,167.7 988.5,164.0 989.0,159.4 989.5,151.0 990.0,146.9 990.5,145.8 991.0,149.2 991.5,154.3 992.0,160.8 992.5,167.0 993.0,169.0 993.5,165.7 994.0,159.2 994.5,155.1 995.0,151.2 995.5,152.2 996.0,156.6 996.5,157.3 997.0,163.0 997.5,170.1 998.0,171.7 998.5,168.1 999.0,162.3 999.5,156.6 1000.0,151.3 1000.5,149.5 1001.0,152.7 1001.5,157.5 1002.0,163.2 1002.5,168.0 1003.0,169.1 1003.5,167.6 1004.0,164.9 1004.5,159.9 1005.0,153.4 1005.5,151.5 1006.0,151.4 1006.5,152.9 1007.0,159.4 1007.5,164.8 1008.0,169.8 1008.5,172.0 1009.0,171.6 1009.5,167.3 1010.0,161.0 1010.5,153.7 1011.0,149.8 1011.5,148.3 1012.0,148.9 1012.5,154.9 1013.0,162.6 1013.5,168.5 1014.0,172.8 1014.5,168.6 1015.0,173.7 1015.5,179.6 1016.0,185.9 1016.5,185.9 1017.0,187.3 1017.5,191.4 1018.0,194.9 1018.5,197.9 1019.0,198.2 1019.5,198.4 1020.0,200.3 1020.5,202.7 1021.0,204.1 1021.5,204.8 1022.0,206.6 1022.5,207.5 1023.0,208.1 1023.5,208.9 1024.0,210.1 1024.5,213.2 1025.0,216.5 1025.5,219.4 1026.0,217.9 1026.5,216.3 1027.0,214.9 1027.5,213.7 1028.0,213.0 1028.5,210.2 1029.0,208.2 1029.5,205.0 1030.0,201.8 1030.5,199.6 1031.0,200.2 1031.5,201.2 1032.0,204.3 1032.5,206.9 1033.0,205.8 1033.5,207.2 1034.0,210.6 1034.5,207.0 1035.0,203.7 1035.5,203.7 1036.0,204.2 1036.5,203.2 1037.0,201.4 1037.5,200.3 1038.0,199.3 1038.5,198.2 1039.0,197.7 1039.5,198.0 1040.0,198.3 1040.5,199.1 1041.0,197.4 1041.5,196.4 1042.0,193.6 1042.5,192.8 1043.0,193.6 1043.5,195.3 1044.0,196.9 1044.5,198.5 1045.0,201.0 1045.5,201.9 1046.0,205.2 1046.5,206.5 1047.0,208.0 1047.5,208.6 1048.0,212.4 1048.5,215.8 1049.0,216.5 1049.5,217.2 1050.0,217.0 1050.5,218.3 1051.0,220.5 1051.5,219.7 1052.0,217.3 1052.5,215.5 1053.0,212.4 1053.5,212.0 1054.0,212.2 1054.5,213.0 1055.0,212.1 1055.5,214.7 1056.0,215.2 1056.5,210.1 1057.0,205.4 1057.5,205.2 1058.0,205.2 1058.5,203.9 1059.0,202.5 1059.5,203.0 1060.0,204.7 1060.5,204.2 1061.0,202.9 1061.5,204.4 1062.0,204.1 1062.5,202.9 1063.0,201.3 1063.5,199.9 1064.0,198.8 1064.5,200.4 1065.0,201.9 1065.5,201.5 1066.0,201.8 1066.5,201.2 1067.0,201.1 1067.5,199.8 1068.0,198.6 1068.5,198.6 1069.0,200.2 1069.5,201.1 1070.0,201.0 1070.5,201.7 1071.0,200.6 1071.5,201.3 1072.0,202.1 1072.5,202.7 1073.0,202.8 1073.5,204.4 1074.0,206.0 1074.5,207.4 1075.0,206.8 1075.5,204.9 1076.0,203.9 1076.5,205.7 1077.0,207.7 1077.5,208.3 1078.0,209.4 1078.5,209.6 1079.0,209.6 1079.5,208.9 1080.0,208.2 1080.5,206.8 1081.0,205.8 1081.5,204.9 1082.0,206.3 1082.5,206.9 1083.0,209.0 1083.5,207.3 1084.0,202.4 1084.5,198.9 1085.0,197.5 1085.5,196.7 1086.0,196.9 1086.5,194.9 1087.0,189.2 1087.5,184.9 1088.0,183.4 1088.5,184.9 1089.0,185.9 1089.5,186.2 1090.0,184.5 1090.5,183.2 1091.0,183.1 1091.5,182.5 1092.0,182.6 1092.5,184.4 1093.0,186.3 1093.5,186.3 1094.0,185.8 1094.5,184.1 1095.0,183.3 1095.5,183.2 1096.0,184.0 1096.5,184.7 1097.0,185.7 1097.5,188.2 1098.0,188.4 1098.5,187.9 1099.0,186.5 1099.5,186.7 1100.0,184.1 1100.5,183.0 1101.0,182.6 1101.5,184.1 1102.0,184.6 1102.5,184.6 1103.0,185.2 1103.5,185.5 1104.0,183.9 1104.5,180.7 1105.0,178.4 1105.5,175.4 1106.0,173.5 1106.5,176.7 1107.0,180.8 1107.5,182.0 1108.0,181.0 1108.5,183.2 1109.0,186.6 1109.5,185.2 1110.0,182.6 1110.5,182.9 1111.0,185.6 1111.5,189.2 1112.0,187.5 1112.5,184.0 1113.0,183.2 1113.5,182.5 1114.0,183.5 1114.5,183.3 1115.0,183.4 1115.5,182.6 1116.0,182.8 1116.5,183.2 1117.0,186.4 1117.5,188.4 1118.0,187.9 1118.5,188.1 1119.0,185.7 1119.5,183.0 1120.0,183.1 1120.5,184.6 1121.0,184.1 1121.5,184.4 1122.0,183.9 1122.5,185.5 1123.0,187.0 1123.5,188.0 1124.0,188.4 1124.5,188.7 1125.0,187.3 1125.5,184.4 1126.0,184.2 1126.5,185.8 1127.0,188.9 1127.5,189.6 1128.0,190.0 1128.5,188.5 1129.0,187.3 1129.5,186.2 1130.0,185.6 1130.5,186.8 1131.0,188.5 1131.5,189.0 1132.0,190.0 1132.5,190.9 1133.0,188.2 1133.5,187.4 1134.0,188.4 1134.5,187.5 1135.0,185.9 1135.5,184.1 1136.0,184.7 1136.5,185.9 1137.0,185.9 1137.5,185.5 1138.0,185.6 1138.5,184.3 1139.0,183.3 1139.5,182.6 1140.0,183.9 1140.5,186.9 1141.0,190.7 1141.5,189.5 1142.0,192.1 1142.5,194.0 1143.0,189.5 1143.5,185.9 1144.0,184.9 1144.5,184.7 1145.0,186.8 1145.5,188.8 1146.0,188.3 1146.5,186.3 1147.0,185.2 1147.5,183.7 1148.0,182.9 1148.5,183.1 1149.0,184.8 1149.5,185.9 1150.0,187.8 1150.5,190.1 1151.0,189.4 1151.5,190.4 1152.0,190.6 1152.5,188.7 1153.0,185.5 1153.5,183.9 1154.0,184.6 1154.5,187.7 1155.0,188.3 1155.5,186.5 1156.0,184.4 1156.5,184.0 1157.0,184.4 1157.5,185.5 1158.0,186.2 1158.5,186.5 1159.0,186.0 1159.5,186.0 1160.0,186.1 1160.5,186.4 1161.0,188.2 1161.5,190.0 1162.0,190.1 1162.5,187.4 1163.0,185.2 1163.5,182.9 1164.0,183.4 1164.5,185.0 1165.0,186.4 1165.5,186.2 1166.0,185.5 1166.5,183.9 1167.0,182.6 1167.5,183.5 1168.0,186.5 1168.5,189.8 1169.0,189.3 1169.5,186.3 1170.0,184.3 1170.5,183.6 1171.0,183.5 1171.5,183.5 1172.0,183.4 1172.5,184.3 1173.0,186.3 1173.5,189.3 1174.0,189.1 1174.5,188.7 1175.0,187.3 1175.5,186.5 1176.0,185.1 1176.5,184.1 1177.0,182.1 1177.5,182.0 1178.0,185.6 1178.5,189.1 1179.0,188.5 1179.5,186.8 1180.0,184.4 1180.5,183.2 1181.0,184.6 1181.5,185.1 1182.0,186.5 1182.5,187.5 1183.0,186.9 1183.5,184.4 1184.0,184.1 1184.5,185.4 1185.0,185.2 1185.5,185.0 1186.0,186.4 1186.5,188.7 1187.0,188.7 1187.5,188.3 1188.0,185.4 1188.5,186.2 1189.0,187.6 1189.5,189.7 1190.0,189.0 1190.5,188.7 1191.0,185.1 1191.5,183.8 1192.0,183.5 1192.5,184.8 1193.0,185.3 1193.5,186.5 1194.0,186.9 1194.5,184.7 1195.0,184.1 1195.5,183.9 1196.0,183.9 1196.5,183.9 1197.0,183.5 1197.5,183.1 1198.0,182.1 1198.5,181.8 1199.0,183.7 1199.5,184.6 1200.0,184.4 1200.5,183.9 1201.0,183.6 1201.5,183.4 1202.0,184.9 1202.5,186.6 1203.0,187.0 1203.5,187.4 1204.0,186.1 1204.5,185.8 1205.0,184.9 1205.5,185.7 1206.0,186.4 1206.5,186.7 1207.0,186.2 1207.5,184.6 1208.0,184.5 1208.5,185.8 1209.0,186.2 1209.5,186.0 1210.0,184.0 1210.5,183.6 1211.0,183.1 1211.5,182.7 1212.0,181.3 1212.5,183.5 1213.0,184.5 1213.5,183.6 1214.0,182.3 1214.5,181.8 1215.0,181.9 1215.5,183.2 1216.0,183.6 1216.5,183.9 1217.0,184.8 1217.5,185.1 1218.0,184.9 1218.5,184.0 1219.0,184.4 1219.5,188.4 1220.0,187.5 1220.5,186.5 1221.0,186.3 1221.5,187.1 1222.0,186.3 1222.5,187.8 1223.0,188.3 1223.5,186.3 1224.0,182.8 1224.5,181.3 1225.0,181.4 1225.5,184.2 1226.0,186.1 1226.5,184.6 1227.0,183.2 1227.5,184.1 1228.0,183.9 1228.5,183.3 1229.0,182.6 1229.5,184.5 1230.0,184.1 1230.5,185.2 1231.0,183.1 1231.5,182.3 1232.0,182.6 1232.5,186.0 1233.0,187.5 1233.5,186.5 1234.0,185.9 1234.5,185.5 1235.0,183.6 1235.5,183.4 1236.0,184.5 1236.5,184.7 1237.0,184.0 1237.5,184.1 1238.0,185.9 1238.5,188.7 1239.0,190.6 1239.5,189.0 1240.0,186.6 1240.5,185.1 1241.0,183.8 1241.5,183.5 1242.0,183.5 1242.5,183.9 1243.0,184.9 1243.5,186.1 1244.0,186.0 1244.5,185.8 1245.0,184.1 1245.5,183.3 1246.0,183.2 1246.5,183.9 1247.0,184.9 1247.5,184.8 1248.0,183.9 1248.5,183.2 1249.0,182.6 1249.5,182.2 1250.0,182.1 1250.5,181.4 1251.0,182.6 1251.5,186.7 1252.0,189.1 1252.5,187.2 1253.0,184.0 1253.5,183.4 1254.0,183.2 1254.5,183.9 1255.0,183.7 1255.5,184.0 1256.0,184.4 1256.5,188.9 1257.0,191.9 1257.5,189.1 1258.0,184.9 1258.5,184.3 1259.0,184.6 1259.5,186.3 1260.0,186.6 1260.5,186.9 1261.0,185.7 1261.5,185.5 1262.0,186.6 1262.5,187.2 1263.0,186.2 1263.5,185.1 1264.0,185.8 1264.5,188.3 1265.0,189.1 1265.5,187.8 1266.0,186.1 1266.5,185.6 1267.0,184.2 1267.5,182.2 1268.0,182.0 1268.5,181.4 1269.0,180.4 1269.5,183.1 1270.0,185.0 1270.5,186.4 1271.0,187.8 1271.5,190.6 1272.0,191.0 1272.5,189.5 1273.0,186.6 1273.5,183.9 1274.0,183.2 1274.5,184.8 1275.0,186.2 1275.5,187.5 1276.0,187.6 1276.5,186.6 1277.0,186.1 1277.5,189.8 1278.0,193.2 1278.5,191.7 1279.0,188.8 1279.5,187.5 1280.0,186.2 1280.5,183.8 1281.0,182.6 1281.5,183.8 1282.0,185.3 1282.5,184.7 1283.0,183.9 1283.5,182.7 1284.0,182.8 1284.5,181.0 1285.0,180.4 1285.5,181.8 1286.0,185.0 1286.5,189.0 1287.0,192.0 1287.5,189.3 1288.0,184.8 1288.5,182.6 1289.0,182.6 1289.5,185.4 1290.0,187.6 1290.5,190.8 1291.0,191.3 1291.5,190.0 1292.0,189.2 1292.5,188.0 1293.0,186.7 1293.5,186.6 1294.0,188.8 1294.5,189.9 1295.0,190.8 1295.5,190.8 1296.0,189.6 1296.5,188.2 1297.0,189.2 1297.5,188.5 1298.0,187.3 1298.5,185.2 1299.0,186.0 1299.5,187.0 1300.0,187.4 1300.5,185.1 1301.0,183.8 1301.5,184.0 1302.0,182.9 1302.5,183.3 1303.0,185.3 1303.5,187.2 1304.0,190.1 1304.5,193.5 1305.0,190.2 1305.5,187.9 1306.0,187.1 1306.5,186.0 1307.0,184.2 1307.5,184.4 1308.0,184.7 1308.5,185.9 1309.0,186.3 1309.5,185.2 1310.0,185.0 1310.5,185.7 1311.0,186.0 1311.5,185.9 1312.0,185.8 1312.5,188.8 1313.0,192.0 1313.5,193.1 1314.0,194.9 1314.5,196.9 1315.0,192.9 1315.5,187.6 1316.0,185.7 1316.5,185.7 1317.0,185.4 1317.5,183.8 1318.0,181.6 1318.5,181.5 1319.0,182.6 1319.5,183.9 1320.0,184.6 1320.5,186.3 1321.0,186.5 1321.5,186.9 1322.0,186.1 1322.5,185.2 1323.0,183.6 1323.5,184.4 1324.0,185.4 1324.5,186.2 1325.0,184.9 1325.5,184.7 1326.0,185.1 1326.5,184.9 1327.0,183.5 1327.5,182.2 1328.0,184.9 1328.5,188.4 1329.0,190.3 1329.5,189.5 1330.0,190.4 1330.5,190.4 1331.0,188.9 1331.5,187.9 1332.0,188.5 1332.5,188.7 1333.0,188.1 1333.5,188.7 1334.0,190.2 1334.5,191.8 1335.0,191.1 1335.5,188.6 1336.0,185.7 1336.5,184.6 1337.0,185.8 1337.5,186.3 1338.0,187.6 1338.5,185.5 1339.0,184.0 1339.5,183.5 1340.0,183.8 1340.5,183.4 1341.0,184.0 1341.5,182.2 1342.0,182.3 1342.5,184.0 1343.0,187.1 1343.5,189.3 1344.0,191.5 1344.5,188.6 1345.0,184.7 1345.5,182.1 1346.0,181.1 1346.5,181.9 1347.0,182.5 1347.5,182.4 1348.0,182.2 1348.5,183.0 1349.0,183.4 1349.5,185.1 1350.0,184.8 1350.5,185.1 1351.0,184.3 1351.5,182.8 1352.0,182.1 1352.5,184.1 1353.0,188.6 1353.5,191.9 1354.0,192.9 1354.5,190.9 1355.0,189.1 1355.5,188.3 1356.0,187.9 1356.5,186.3 1357.0,186.2 1357.5,185.3 1358.0,185.2 1358.5,184.3 1359.0,183.7 1359.5,185.2 1360.0,188.0 1360.5,188.3 1361.0,187.5 1361.5,188.1 1362.0,186.8 1362.5,185.5 1363.0,185.5 1363.5,186.8 1364.0,187.2 1364.5,188.3 1365.0,188.7 1365.5,187.6 1366.0,185.9 1366.5,186.7 1367.0,185.7 1367.5,184.5 1368.0,182.5 1368.5,184.0 1369.0,185.2 1369.5,188.2 1370.0,191.5 1370.5,194.0 1371.0,189.4 1371.5,185.7 1372.0,184.7 1372.5,185.3 1373.0,183.2 1373.5,181.3 1374.0,180.8 1374.5,180.7 1375.0,181.7 1375.5,184.5 1376.0,187.0 1376.5,188.7 1377.0,187.4 1377.5,184.2 1378.0,182.5 1378.5,181.3 1379.0,181.8 1379.5,185.3 1380.0,186.9 1380.5,184.3 1381.0,183.7 1381.5,185.3 1382.0,186.0 1382.5,187.4 1383.0,187.3 1383.5,188.2 1384.0,188.8 1384.5,189.1 1385.0,188.5 1385.5,187.0 1386.0,184.8 1386.5,183.9 1387.0,184.6 1387.5,184.1 1388.0,188.0 1388.5,192.0 1389.0,189.5 1389.5,183.6 1390.0,182.3 1390.5,182.1 1391.0,183.0 1391.5,183.8 1392.0,184.4 1392.5,185.0 1393.0,185.0 1393.5,185.3 1394.0,185.7 1394.5,189.1 1395.0,190.2 1395.5,188.7 1396.0,185.6 1396.5,185.2 1397.0,184.2 1397.5,184.2 1398.0,183.7 1398.5,184.0 1399.0,182.8 1399.5,182.5 1400.0,181.5 1400.5,179.8 1401.0,179.5 1401.5,181.5 1402.0,183.3 1402.5,183.6 1403.0,182.6 1403.5,183.2 1404.0,178.5 1404.5,179.7 1405.0,179.4 1405.5,185.8 1406.0,185.4 1406.5,184.5 1407.0,182.8 1407.5,184.1 1408.0,186.0 1408.5,188.2 1409.0,188.5 1409.5,188.7 1410.0,187.3 1410.5,186.7 1411.0,187.3 1411.5,190.2 1412.0,190.2 1412.5,188.2 1413.0,187.3 1413.5,187.4 1414.0,187.8 1414.5,186.1 1415.0,183.7 1415.5,183.4 1416.0,184.3 1416.5,186.3 1417.0,188.5 1417.5,189.4 1418.0,188.1 1418.5,187.3 1419.0,188.2 1419.5,190.9 1420.0,190.8 1420.5,189.9 1421.0,189.9 1421.5,189.1 1422.0,187.7 1422.5,186.5 1423.0,187.6 1423.5,187.2 1424.0,187.3 1424.5,186.7 1425.0,186.5 1425.5,186.0 1426.0,185.4 1426.5,184.4 1427.0,185.2 1427.5,186.0 1428.0,185.5 1428.5,185.7 1429.0,186.0 1429.5,185.3 1430.0,184.7 1430.5,185.5 1431.0,187.9 1431.5,192.4 1432.0,193.1 1432.5,192.0 1433.0,190.0 1433.5,190.5 1434.0,192.0 1434.5,190.3 1435.0,187.8 1435.5,187.3 1436.0,188.9 1436.5,188.8 1437.0,190.6 1437.5,190.5 1438.0,189.1 1438.5,187.7 1439.0,188.0 1439.5,187.7 1440.0,185.3 1440.5,183.7 1441.0,185.1 1441.5,187.3 1442.0,189.7 1442.5,193.0 1443.0,190.6 1443.5,187.1 1444.0,185.6 1444.5,186.4 1445.0,186.4 1445.5,186.8 1446.0,186.7 1446.5,186.3 1447.0,185.3 1447.5,187.0 1448.0,186.4 1448.5,184.8 1449.0,185.5 1449.5,187.5 1450.0,188.7 1450.5,188.7 1451.0,188.6 1451.5,188.3 1452.0,190.9 1452.5,194.4 1453.0,190.4 1453.5,185.5 1454.0,185.5 1454.5,185.8 1455.0,185.9 1455.5,185.5 1456.0,186.3 1456.5,187.7 1457.0,188.9 1457.5,190.1 1458.0,191.2 1458.5,192.1 1459.0,191.9 1459.5,190.7 1460.0,188.7 1460.5,189.6 1461.0,190.7 1461.5,191.0 1462.0,187.1 1462.5,185.3 1463.0,186.5 1463.5,188.0 1464.0,189.3 1464.5,189.3 1465.0,189.0 1465.5,188.9 1466.0,189.0 1466.5,187.5 1467.0,186.0 1467.5,184.6 1468.0,186.0 1468.5,186.1 1469.0,187.1 1469.5,185.9 1470.0,186.0 1470.5,184.8 1471.0,183.0 1471.5,182.9 1472.0,184.0 1472.5,187.0 1473.0,188.5 1473.5,189.6 1474.0,189.6 1474.5,189.1 1475.0,188.2 1475.5,189.3 1476.0,189.3 1476.5,188.5 1477.0,187.3 1477.5,187.0 1478.0,186.1 1478.5,186.6 1479.0,187.1 1479.5,187.9 1480.0,187.1 1480.5,187.2 1481.0,187.0 1481.5,187.7 1482.0,188.6 1482.5,190.5 1483.0,192.1 1483.5,192.6 1484.0,192.2 1484.5,189.0 1485.0,187.7 1485.5,187.5 1486.0,187.5 1486.5,187.5 1487.0,185.9 1487.5,184.2 1488.0,182.5 1488.5,182.5 1489.0,183.0 1489.5,184.6 1490.0,184.3 1490.5,188.3 1491.0,190.3 1491.5,186.3 1492.0,182.0 1492.5,180.8 1493.0,180.1 1493.5,182.5 1494.0,185.6 1494.5,189.9 1495.0,192.3 1495.5,189.5 1496.0,185.7 1496.5,186.8 1497.0,187.0 1497.5,189.6 1498.0,191.0 1498.5,191.0 1499.0,189.0 1499.5,187.8 1500.0,187.0 1500.5,188.1 1501.0,188.4 1501.5,190.2 1502.0,189.2 1502.5,187.5 1503.0,186.2 1503.5,187.7 1504.0,186.7 1504.5,186.3 1505.0,185.3 1505.5,184.6 1506.0,187.1 1506.5,191.3 1507.0,191.7 1507.5,189.0 1508.0,186.6 1508.5,186.3 1509.0,186.8 1509.5,186.8 1510.0,186.7 1510.5,188.6 1511.0,189.2 1511.5,188.0 1512.0,185.5 1512.5,183.5 1513.0,181.8 1513.5,185.7 1514.0,190.7 1514.5,189.8 1515.0,188.5 1515.5,192.2 1516.0,191.6 1516.5,190.2 1517.0,190.2 1517.5,194.1 1518.0,195.8 1518.5,190.6 1519.0,185.2 1519.5,185.4 1520.0,185.4 1520.5,184.5 1521.0,182.8 1521.5,184.7 1522.0,185.3 1522.5,187.4 1523.0,188.2 1523.5,189.0 1524.0,188.1 1524.5,186.5 1525.0,185.0 1525.5,186.0 1526.0,186.3 1526.5,187.4 1527.0,186.3 1527.5,186.6 1528.0,188.0 1528.5,188.4 1529.0,189.4 1529.5,192.5 1530.0,193.2 1530.5,190.8 1531.0,191.0 1531.5,193.0 1532.0,192.8 1532.5,191.6 1533.0,189.6 1533.5,187.5 1534.0,186.6 1534.5,187.1 1535.0,187.8 1535.5,187.9 1536.0,186.4 1536.5,185.8 1537.0,185.2 1537.5,185.6 1538.0,186.8 1538.5,189.1 1539.0,190.2 1539.5,190.6 1540.0,190.4 1540.5,189.4 1541.0,188.5 1541.5,188.5 1542.0,188.1 1542.5,188.6 1543.0,189.2 1543.5,189.4 1544.0,187.4 1544.5,186.7 1545.0,186.2 1545.5,186.3 1546.0,187.7 1546.5,188.2 1547.0,186.8 1547.5,183.8 1548.0,182.4 1548.5,182.2 1549.0,184.5 1549.5,188.6 1550.0,189.0 1550.5,187.6 1551.0,187.7 1551.5,189.6 1552.0,190.4 1552.5,190.7 1553.0,193.1 1553.5,194.9 1554.0,195.1 1554.5,193.3 1555.0,192.0 1555.5,190.3 1556.0,188.1 1556.5,186.8 1557.0,186.2 1557.5,186.1 1558.0,186.7 1558.5,189.7 1559.0,191.1 1559.5,190.8 1560.0,188.9 1560.5,189.1 1561.0,189.3 1561.5,190.3 1562.0,189.1 1562.5,186.5 1563.0,184.5 1563.5,184.4 1564.0,186.5 1564.5,187.3 1565.0,186.9 1565.5,187.0 1566.0,187.9 1566.5,188.3 1567.0,188.3 1567.5,186.5 1568.0,184.6 1568.5,185.1 1569.0,186.4 1569.5,185.9 1570.0,185.8 1570.5,187.5 1571.0,186.6 1571.5,187.0 1572.0,187.4 1572.5,187.9 1573.0,186.9 1573.5,185.8 1574.0,185.1 1574.5,185.5 1575.0,185.9 1575.5,188.2 1576.0,190.0 1576.5,190.7 1577.0,190.8 1577.5,191.5 1578.0,193.0 1578.5,193.9 1579.0,194.0 1579.5,192.1 1580.0,190.7 1580.5,189.5 1581.0,188.1 1581.5,187.4 1582.0,187.6 1582.5,185.8 1583.0,184.9 1583.5,184.5 1584.0,186.9 1584.5,189.6 1585.0,191.4 1585.5,191.0 1586.0,189.2 1586.5,188.3 1587.0,191.5 1587.5,199.5 1588.0,201.3 1588.5,196.2 1589.0,190.9 1589.5,187.8 1590.0,185.4 1590.5,183.6 1591.0,184.8 1591.5,188.0 1592.0,188.7 1592.5,188.1 1593.0,189.7 1593.5,190.8 1594.0,189.8 1594.5,188.7 1595.0,188.3 1595.5,189.0 1596.0,190.9 1596.5,192.9 1597.0,194.4 1597.5,195.1 1598.0,195.1 1598.5,192.7 1599.0,189.5 1599.5,188.2 1600.0,188.5 1600.5,189.0 1601.0,190.0 1601.5,189.3 1602.0,191.2 1602.5,195.3 1603.0,194.1 1603.5,192.0 1604.0,193.1 1604.5,193.1 1605.0,190.5 1605.5,187.0 1606.0,185.2 1606.5,185.3 1607.0,185.7 1607.5,188.5 1608.0,190.2 1608.5,189.3 1609.0,189.6 1609.5,190.7 1610.0,189.8 1610.5,188.1 1611.0,189.0 1611.5,188.8 1612.0,189.3 1612.5,189.7 1613.0,189.0 1613.5,190.4 1614.0,194.2 1614.5,192.2 1615.0,189.7 1615.5,189.7 1616.0,192.0 1616.5,193.1 1617.0,193.9 1617.5,192.7 1618.0,192.4 1618.5,190.6 1619.0,191.9 1619.5,192.9 1620.0,193.6 1620.5,192.6 1621.0,190.3 1621.5,189.2 1622.0,189.8 1622.5,191.7 1623.0,193.1 1623.5,193.9 1624.0,194.4 1624.5,194.7 1625.0,192.2 1625.5,188.6 1626.0,185.6 1626.5,186.0 1627.0,187.7 1627.5,190.2 1628.0,191.3 1628.5,194.0 1629.0,194.5 1629.5,194.9 1630.0,192.6 1630.5,191.1 1631.0,190.2 1631.5,189.6 1632.0,189.3 1632.5,190.4 1633.0,190.7 1633.5,189.7 1634.0,188.2 1634.5,188.6 1635.0,188.8 1635.5,190.9 1636.0,191.4 1636.5,190.5 1637.0,189.9 1637.5,189.3 1638.0,190.4 1638.5,190.2 1639.0,189.4 1639.5,186.0 1640.0,185.6 1640.5,188.5 1641.0,191.1 1641.5,192.8 1642.0,191.1 1642.5,190.4 1643.0,191.8 1643.5,197.9 1644.0,200.8 1644.5,194.6 1645.0,189.0 1645.5,191.0 1646.0,194.8 1646.5,196.2 1647.0,196.1 1647.5,194.1 1648.0,191.9 1648.5,191.0 1649.0,189.9 1649.5,188.9 1650.0,190.9 1650.5,191.7 1651.0,192.7 1651.5,191.9 1652.0,189.7 1652.5,187.9 1653.0,187.7 1653.5,187.2 1654.0,185.9 1654.5,185.8 1655.0,185.2 1655.5,184.4 1656.0,183.6 1656.5,184.6 1657.0,186.8 1657.5,191.1 1658.0,192.5 1658.5,191.3 1659.0,189.8 1659.5,190.8 1660.0,190.3 1660.5,191.6 1661.0,192.9 1661.5,191.6 1662.0,188.7 1662.5,188.0 1663.0,188.6 1663.5,189.2 1664.0,188.1 1664.5,190.5 1665.0,194.5 1665.5,193.1 1666.0,195.2 1666.5,199.9 1667.0,195.2 1667.5,189.1 1668.0,188.9 1668.5,189.7 1669.0,188.1 1669.5,187.0 1670.0,187.8 1670.5,191.1 1671.0,191.7 1671.5,192.6 1672.0,195.1 1672.5,198.4 1673.0,195.3 1673.5,195.7 1674.0,194.9 1674.5,193.5 1675.0,191.6 1675.5,190.6 1676.0,188.5 1676.5,188.5 1677.0,192.1 1677.5,195.8 1678.0,195.4 1678.5,195.8 1679.0,195.2 1679.5,197.4 1680.0,196.8 1680.5,194.8 1681.0,191.5 1681.5,188.6 1682.0,185.8 1682.5,185.1 1683.0,186.7 1683.5,187.8 1684.0,189.0 1684.5,192.0 1685.0,194.8 1685.5,196.3 1686.0,199.5 1686.5,202.0 1687.0,196.3 1687.5,191.7 1688.0,191.7 1688.5,190.4 1689.0,189.1 1689.5,189.0 1690.0,190.4 1690.5,192.8 1691.0,192.8 1691.5,191.7 1692.0,190.3 1692.5,187.7 1693.0,188.9 1693.5,192.8 1694.0,196.6 1694.5,196.2 1695.0,194.7 1695.5,193.3 1696.0,192.9 1696.5,193.2 1697.0,194.1 1697.5,193.9 1698.0,193.7 1698.5,192.3 1699.0,190.0 1699.5,188.6 1700.0,187.3 1700.5,187.8 1701.0,188.0 1701.5,189.4 1702.0,190.5 1702.5,191.3 1703.0,189.9 1703.5,188.7 1704.0,189.5 1704.5,192.1 1705.0,195.6 1705.5,196.1 1706.0,195.9 1706.5,194.5 1707.0,193.7 1707.5,192.9 1708.0,191.3 1708.5,189.7 1709.0,193.8 1709.5,195.7 1710.0,194.1 1710.5,193.7 1711.0,192.7 1711.5,191.0 1712.0,190.0 1712.5,189.8 1713.0,191.5 1713.5,193.4 1714.0,194.9 1714.5,196.8 1715.0,196.9 1715.5,196.1 1716.0,192.5 1716.5,190.0 1717.0,188.9 1717.5,191.0 1718.0,192.0 1718.5,192.6 1719.0,192.8 1719.5,191.0 1720.0,190.7 1720.5,190.5 1721.0,191.3 1721.5,196.0 1722.0,199.4 1722.5,200.8 1723.0,202.5 1723.5,205.2 1724.0,209.1 1724.5,211.8 1725.0,214.6 1725.5,213.9 1726.0,211.3 1726.5,208.3 1727.0,205.2 1727.5,203.1 1728.0,202.4 1728.5,202.5 1729.0,203.8 1729.5,204.7 1730.0,204.9 1730.5,203.2 1731.0,205.2 1731.5,208.1 1732.0,209.0 1732.5,208.2 1733.0,209.4 1733.5,207.7 1734.0,206.5 1734.5,206.5 1735.0,206.8 1735.5,205.2 1736.0,205.0 1736.5,206.2 1737.0,207.9 1737.5,211.3 1738.0,207.0 1738.5,201.9 1739.0,199.9 1739.5,198.2 1740.0,196.1 1740.5,196.1 1741.0,196.4 1741.5,197.6 1742.0,197.2 1742.5,197.6 1743.0,199.4 1743.5,205.2 1744.0,207.5 1744.5,202.4 1745.0,196.9 1745.5,196.2 1746.0,195.2 1746.5,194.2 1747.0,194.9 1747.5,195.4 1748.0,194.8 1748.5,194.5 1749.0,194.9 1749.5,194.6 1750.0,194.6 1750.5,193.4 1751.0,192.6 1751.5,192.6 1752.0,191.1 1752.5,189.8 1753.0,189.0 1753.5,189.1 1754.0,190.7 1754.5,192.6 1755.0,192.1 1755.5,191.7 1756.0,191.0 1756.5,189.8 1757.0,187.2 1757.5,185.4 1758.0,183.7 1758.5,183.1 1759.0,183.6 1759.5,183.6 1760.0,184.8 1760.5,186.8 1761.0,190.5 1761.5,194.0 1762.0,192.1 1762.5,188.1 1763.0,186.1 1763.5,183.8 1764.0,181.6 1764.5,180.2 1765.0,180.0 1765.5,180.8 1766.0,183.3 1766.5,186.5 1767.0,187.3 1767.5,187.0 1768.0,186.8 1768.5,185.2 1769.0,182.1 1769.5,178.5 1770.0,176.6 1770.5,175.7 1771.0,176.6 1771.5,179.0 1772.0,182.9 1772.5,185.0 1773.0,186.4 1773.5,186.2 1774.0,182.0 1774.5,178.6 1775.0,175.1 1775.5,175.1 1776.0,175.9 1776.5,179.5 1777.0,181.8 1777.5,183.9 1778.0,184.7 1778.5,183.1 1779.0,178.8 1779.5,174.1 1780.0,170.7 1780.5,168.2 1781.0,168.1 1781.5,170.2 1782.0,174.8 1782.5,178.3 1783.0,181.4 1783.5,181.8 1784.0,180.1 1784.5,175.2 1785.0,171.2 1785.5,168.1 1786.0,165.8 1786.5,167.0 1787.0,167.5 1787.5,170.3 1788.0,175.1 1788.5,177.8 1789.0,178.1 1789.5,175.3 1790.0,171.6 1790.5,168.7 1791.0,165.9 1791.5,163.0 1792.0,162.1 1792.5,163.0 1793.0,165.5 1793.5,169.6 1794.0,171.2 1794.5,173.7 1795.0,176.8 1795.5,176.6 1796.0,173.8 1796.5,170.9 1797.0,165.5 1797.5,162.1 1798.0,158.4 1798.5,156.6 1799.0,158.0 1799.5,162.1 1800.0,165.5 1800.5,169.0 1801.0,169.8 1801.5,167.2 1802.0,163.5 1802.5,160.9 1803.0,157.0 1803.5,154.1 1804.0,153.9 1804.5,156.2 1805.0,160.7 1805.5,166.2 1806.0,171.6 1806.5,174.2 1807.0,172.6 1807.5,168.6 1808.0,163.7 1808.5,157.7 1809.0,152.9 1809.5,152.7 1810.0,156.3 1810.5,161.8 1811.0,165.0 1811.5,168.8 1812.0,170.8 1812.5,171.4 1813.0,168.8 1813.5,165.3 1814.0,158.3 1814.5,156.8 1815.0,156.7 1815.5,155.7 1816.0,156.5 1816.5,158.9 1817.0,163.3 1817.5,168.2 1818.0,171.4 1818.5,171.5 1819.0,167.9 1819.5,164.3 1820.0,158.6 1820.5,155.6 1821.0,155.8 1821.5,159.5 1822.0,159.8 1822.5,162.2 1823.0,165.7 1823.5,169.3 1824.0,170.1 1824.5,165.3 1825.0,160.1 1825.5,154.5 1826.0,152.3 1826.5,153.9 1827.0,157.1 1827.5,163.1 1828.0,169.3 1828.5,173.8 1829.0,171.7" fill="none" stroke="#ececec" stroke-width="1.5" stroke-linejoin="round"/>
<line x1="981" y1="40" x2="981" y2="264.5" stroke="#d8574a" stroke-width="2"/>
<line x1="1405.4" y1="41" x2="1405.4" y2="263.5" stroke="#ecec46" stroke-width="1.3"/>
<g fill="#fff" font-size="20" text-anchor="end">
<text x="966" y="48.1">40.0</text>
<text x="966" y="93.6">20.0</text>
<text x="966" y="137.8">0.0</text>
<text x="966" y="182.3">-20.0</text>
<text x="966" y="227.1">-40.0</text>
<text x="966" y="271.1">-60.0</text>
</g><g fill="#fff" font-size="20" text-anchor="middle">
<text x="1047.5" y="287.6">221.2</text>
<text x="1130.3" y="287.6">221.4</text>
<text x="1213.1" y="287.6">221.6</text>
<text x="1295.9" y="287.6">221.8</text>
<text x="1378.7" y="287.6">222</text>
<text x="1461.5" y="287.6">222.2</text>
<text x="1544.3" y="287.6">222.4</text>
<text x="1627.1" y="287.6">222.6</text>
<text x="1709.9" y="287.6">222.8</text>
<text x="1792.7" y="287.6">223</text>
</g>
<text x="1405" y="319.5" fill="#fff" font-size="23.6" text-anchor="middle">Frequency (MHz)</text>
<text transform="translate(884.3,152.8) rotate(-90)" fill="#fff" font-size="23.6" text-anchor="middle">Magnitude (dB)</text>
</svg>
<div class="b " style="left:0.00px;top:339.00px;width:1879.00px;height:7.00px;background:#848686;"></div>
<div class="b " style="left:0.00px;top:346.00px;width:205.00px;height:59.00px;background:#262626;"></div>
<div class="b " style="left:205.00px;top:346.00px;width:620.50px;height:59.00px;background:#2f2f2f;"></div>
<div class="b " style="left:830.00px;top:346.00px;width:1049.00px;height:59.00px;background:#272727;"></div>
<div class="b " style="left:825.50px;top:346.00px;width:4.50px;height:59.00px;background:#f2f2f2;"></div>
<span class="t " style="left:15.30px;top:368.00px;font-size:26.89px;color:#fff;transform:scaleX(0.8522);font-style:italic;">DAB+</span>
<div class="b " style="left:100.40px;top:361.30px;width:89.40px;height:32.60px;background:#232323;border:1px solid #707070;border-radius:4px;box-sizing:border-box;"></div>
<span class="t " style="left:103.05px;top:367.00px;font-size:20.35px;color:#fff;transform:scaleX(0.9338);">11D</span>
<svg class="b" style="left:157px;top:372.5px;width:15.5px;height:10.0px" viewBox="0 0 10 10" preserveAspectRatio="none"><polygon points="0,0 10,0 5,10" fill="#fff"/></svg>
<div class="b " style="left:204.50px;top:346.00px;width:1.20px;height:59.00px;background:#e8e8e8;"></div>
<div class="b " style="left:205.70px;top:346.00px;width:118.30px;height:59.00px;background:#a81517;"></div>
<span class="t " style="left:227.83px;top:366.00px;font-size:23.69px;color:#fb6459;transform:scaleX(0.9610);">EId: 114D</span>
<span class="t " style="left:358.08px;top:367.00px;font-size:23.26px;color:#eeee34;transform:scaleX(1.0044);">Flensburg K11D</span>
<span class="t " style="left:555.79px;top:367.00px;font-size:23.26px;color:#fff;transform:scaleX(1.0333);">2023-06-07</span>
<span class="t " style="left:692.02px;top:367.00px;font-size:23.26px;color:#fff;transform:scaleX(0.9775);">11:43:12 Z</span>
<div class="b " style="left:845.00px;top:361.00px;width:37.50px;height:33.00px;background:#202020;border:1px solid #707070;border-radius:4px;box-sizing:border-box;"></div>
<svg class="b" style="left:855.75px;top:373px;width:15.0px;height:9.5px" viewBox="0 0 10 10" preserveAspectRatio="none"><polygon points="0,0 10,0 5,10" fill="#fff"/></svg>
<div class="b " style="left:917.50px;top:361.25px;width:35.00px;height:35.00px;background:#1c5a8c;border-radius:50%;"></div>
<div class="b " style="left:927.50px;top:371.25px;width:15.00px;height:15.00px;background:#ff0000;border-radius:50%;"></div>
<div class="b " style="left:970.00px;top:361.25px;width:35.00px;height:35.00px;background:#15395c;border-radius:50%;"></div>
<div class="b " style="left:980.75px;top:371.00px;width:14.25px;height:14.50px;background:#181818;"></div>
<span class="t " style="left:1047.72px;top:367.00px;font-size:24.71px;color:#fff;transform:scaleX(0.9174);">SId: D38A</span>
<span class="t " style="left:1196.36px;top:357.00px;font-size:36.34px;color:#fafa28;transform:scaleX(0.9514);">RADIO 21 SH-N</span>
<span class="t " style="left:1492.53px;top:367.00px;font-size:24.71px;color:#fff;transform:scaleX(0.9629);">72 kbps</span>
<span class="t " style="left:1589.98px;top:367.00px;font-size:24.71px;color:#fff;transform:scaleX(0.8712);">EEP 3-A</span>
<svg class="b" style="left:1715px;top:350px;width:40px;height:54px" viewBox="1715 350 40 54"><path d="M1723.1,369.7 H1731.2 L1745.2,360.8 V394.0 L1731.2,385.1 H1723.1 Z M1731.2,369.7 V385.1" fill="none" stroke="#eeeeee" stroke-width="2.9" stroke-linejoin="miter" stroke-miterlimit="6"/></svg>
<div class="b " style="left:1797.50px;top:359.50px;width:94.50px;height:31.50px;background:#202020;border:1px solid #707070;border-radius:4px;box-sizing:border-box;"></div>
<span class="t " style="left:1799.25px;top:366.00px;font-size:19.26px;color:#fff;transform:scaleX(0.9526);">DAB</span>
<svg class="b" style="left:1855px;top:371px;width:14.5px;height:8px" viewBox="0 0 10 10" preserveAspectRatio="none"><polygon points="0,0 10,0 5,10" fill="#fff"/></svg>
<div class="b " style="left:0.00px;top:405.00px;width:1879.00px;height:1.00px;background:#dedede;"></div>
<div class="b " style="left:0.00px;top:406.00px;width:292.00px;height:51.00px;background:#0e2c50;"></div>
<div class="b " style="left:0.00px;top:457.00px;width:292.00px;height:464.00px;background:#1b5a8a;"></div>
<span class="t " style="left:6.37px;top:416.00px;font-size:29.07px;color:#fafa28;">RADIO 21 SH-N</span>
<div class="b " style="left:2.50px;top:724.50px;width:228.00px;height:37.00px;background:#20699e;border:1px solid #2c94d4;box-sizing:border-box;"><div style="position:absolute;left:1px;top:1px;right:1px;bottom:1px;border:1px dotted #04121f"></div></div>
<span class="t " style="left:9.46px;top:468.00px;font-size:24.35px;color:#fff;transform:scaleX(0.8824);">ANTENNE-SYLT</span>
<span class="t " style="left:7.74px;top:506.00px;font-size:24.35px;color:#fff;transform:scaleX(0.8828);">BOLLERWAGEN</span>
<span class="t " style="left:8.47px;top:544.00px;font-size:24.35px;color:#fff;transform:scaleX(1.0121);">delta radio</span>
<span class="t " style="left:7.77px;top:582.00px;font-size:24.35px;color:#fff;transform:scaleX(0.8655);">NORDSEEWELLE</span>
<span class="t " style="left:8.35px;top:620.00px;font-size:24.35px;color:#fff;transform:scaleX(0.9979);">Oldie Antenne</span>
<span class="t " style="left:8.54px;top:657.00px;font-size:24.35px;color:#fff;transform:scaleX(0.8298);">OSTSEEWELLE FL</span>
<span class="t " style="left:7.71px;top:695.00px;font-size:24.35px;color:#fff;transform:scaleX(0.8951);">R.SH</span>
<span class="t " style="left:7.59px;top:733.00px;font-size:24.35px;color:#fff;transform:scaleX(0.9582);">RADIO 21 SH-N</span>
<span class="t " style="left:7.66px;top:771.00px;font-size:24.35px;color:#fff;transform:scaleX(0.9236);">RADIO BOB! SH</span>
<span class="t " style="left:7.56px;top:809.00px;font-size:24.35px;color:#fff;transform:scaleX(0.9710);">Radio Flensburg</span>
<span class="t " style="left:7.51px;top:847.00px;font-size:24.35px;color:#fff;transform:scaleX(0.9944);">Radio Hamburg</span>
<span class="t " style="left:7.66px;top:885.00px;font-size:24.35px;color:#fff;transform:scaleX(0.9206);">ROCK ANTENNE HH</span>
<div class="b " style="left:292.00px;top:406.00px;width:8.00px;height:515.00px;background:#ebebf8;"></div>
<div class="b " style="left:300.00px;top:406.00px;width:271.00px;height:51.00px;background:#0e2c50;"></div>
<div class="b " style="left:300.00px;top:457.00px;width:271.00px;height:464.00px;background:#1b5a8a;"></div>
<span class="t " style="left:307.43px;top:416.00px;font-size:29.07px;color:#fff;transform:scaleX(0.9982);">Service Quality</span>
<span class="t " style="left:314.62px;top:483.00px;font-size:22.09px;color:#fff;transform:scaleX(0.8736);">SNR (dB)</span>
<div class="b " style="left:495.00px;top:473.00px;width:60.00px;height:37.50px;background:#828282;"></div>
<div class="b " style="left:495.00px;top:473.00px;width:10.50px;height:37.50px;background:#ff0000;"></div>
<span class="t " style="left:512.11px;top:483.00px;font-size:18.90px;color:#fff;transform:scaleX(0.9237);">6,7</span>
<span class="t " style="left:313.87px;top:530.00px;font-size:22.09px;color:#fff;transform:scaleX(0.8987);">FIC (ok %)</span>
<div class="b " style="left:495.00px;top:520.00px;width:60.00px;height:37.00px;background:#828282;"></div>
<div class="b " style="left:495.00px;top:520.00px;width:52.00px;height:37.00px;background:#ffa500;"></div>
<span class="t " style="left:514.20px;top:530.00px;font-size:18.90px;color:#fff;transform:scaleX(0.9742);">87</span>
<span class="t " style="left:313.88px;top:576.00px;font-size:22.09px;color:#fff;transform:scaleX(0.8925);">RS (ok %)</span>
<div class="b " style="left:495.00px;top:566.25px;width:60.00px;height:37.00px;background:#828282;"></div>
<span class="t " style="left:519.76px;top:576.00px;font-size:18.90px;color:#fff;transform:scaleX(0.9964);">0</span>
<span class="t " style="left:313.75px;top:621.00px;font-size:22.09px;color:#fff;transform:scaleX(0.9666);">Null Symbol</span>
<div class="b " style="left:495.00px;top:612.50px;width:60.00px;height:36.75px;background:#828282;"></div>
<div class="b " style="left:495.00px;top:612.50px;width:60.00px;height:36.75px;background:#008000;"></div>
<span class="t " style="left:314.57px;top:667.00px;font-size:22.09px;color:#fff;transform:scaleX(0.9271);">SymbolTime (ms)</span>
<div class="b " style="left:495.00px;top:658.00px;width:60.00px;height:37.00px;background:#828282;"></div>
<div class="b " style="left:495.00px;top:658.00px;width:16.75px;height:37.00px;background:#008000;"></div>
<span class="t " style="left:508.08px;top:668.00px;font-size:18.90px;color:#fff;transform:scaleX(0.9018);">0,43</span>
<span class="t " style="left:313.84px;top:713.00px;font-size:22.09px;color:#fff;transform:scaleX(0.9185);">FrameTime (ms)</span>
<div class="b " style="left:495.00px;top:704.25px;width:60.00px;height:37.00px;background:#828282;"></div>
<div class="b " style="left:495.00px;top:704.25px;width:38.00px;height:37.00px;background:#008000;"></div>
<span class="t " style="left:507.96px;top:714.00px;font-size:18.90px;color:#fff;transform:scaleX(0.8937);">96,1</span>
<div class="b " style="left:571.00px;top:406.00px;width:5.50px;height:515.00px;background:#123c64;"></div>
<div class="b " style="left:572.00px;top:406.00px;width:3.50px;height:515.00px;background:#c2c8d4;"></div>
<div class="b " style="left:576.00px;top:406.00px;width:404.50px;height:53.00px;background:#0e2c50;"></div>
<div class="b " style="left:576.00px;top:459.00px;width:404.50px;height:462.00px;background:#1b5a8a;"></div>
<div class="b " style="left:585.00px;top:459.00px;width:395.50px;height:48.00px;background:#0e2c50;"></div>
<div class="b " style="left:588.20px;top:417.00px;width:181.10px;height:40.70px;background:#828282;border-radius:3px 16px 0 0;box-shadow:inset 1px 1px 0 #929292;"></div>
<div class="b " style="left:770.50px;top:417.00px;width:210.00px;height:40.70px;background:#828282;border-radius:3px 0 0 0;box-shadow:inset 1px 1px 0 #929292;"></div>
<div class="b " style="left:588.20px;top:465.80px;width:137.80px;height:41.00px;background:#828282;border-radius:3px 16px 0 0;box-shadow:inset 1px 1px 0 #929292;"></div>
<div class="b " style="left:726.50px;top:465.80px;width:111.50px;height:41.70px;background:#1b5a8a;border-radius:3px 16px 0 0;box-shadow:inset 1px 1px 0 #3f7fb0, inset -1px 0 0 #3f7fb0;"></div>
<div class="b " style="left:839.00px;top:465.80px;width:141.50px;height:41.00px;background:#828282;border-radius:3px 0 0 0;box-shadow:inset 1px 1px 0 #929292;"></div>
<span class="t " style="left:655.45px;top:428.00px;font-size:25.58px;color:#dadada;transform:scaleX(0.9210);">AAC</span>
<span class="t " style="left:836.27px;top:428.00px;font-size:25.58px;color:#dadada;transform:scaleX(1.0171);">Options</span>
<span class="t " style="left:630.94px;top:477.00px;font-size:25.58px;color:#dadada;transform:scaleX(0.9140);">Sync</span>
<span class="t " style="left:769.46px;top:477.00px;font-size:25.58px;color:#fff;transform:scaleX(0.9478);">TII</span>
<span class="t " style="left:882.95px;top:477.00px;font-size:25.58px;color:#dadada;transform:scaleX(1.0264);">Audio</span>
<div class="b " style="left:628.50px;top:522.25px;width:14.00px;height:14.00px;background:#ff0000;border-radius:50%;"></div>
<div class="b " style="left:672.00px;top:522.50px;width:13.00px;height:13.25px;background:#0f2a4a;"></div>
<div class="b " style="left:598.75px;top:550.80px;width:371.25px;height:1.00px;background:#7fa6c6;"></div>
<div class="b " style="left:598.75px;top:605.00px;width:371.25px;height:1.00px;background:#9fb9cf;"></div>
<span class="t " style="left:597.64px;top:580.00px;font-size:22.67px;color:#fff;">Pattern</span>
<span class="t " style="left:698.06px;top:580.00px;font-size:22.67px;color:#fff;transform:scaleX(1.0427);">MainId</span>
<span class="t " style="left:797.73px;top:580.00px;font-size:22.67px;color:#fff;transform:scaleX(0.9910);">SubId</span>
<span class="t " style="left:885.21px;top:580.00px;font-size:22.67px;color:#fff;transform:scaleX(1.0064);">Strength</span>
<span class="t " style="left:600.44px;top:627.00px;font-size:20.06px;color:#fff;transform:scaleX(1.0339);">0x96</span>
<span class="t " style="left:701.52px;top:627.00px;font-size:20.06px;color:#fff;transform:scaleX(1.0421);">41</span>
<span class="t " style="left:801.16px;top:627.00px;font-size:20.06px;color:#fff;transform:scaleX(1.0515);">5</span>
<span class="t " style="left:887.97px;top:627.00px;font-size:20.06px;color:#fff;transform:scaleX(0.9900);">0.83</span>
<div class="b " style="left:980.50px;top:406.00px;width:7.50px;height:515.00px;background:#f1f1f1;"></div>
<div class="b " style="left:988.00px;top:406.00px;width:891.00px;height:30.00px;background:#0e2c50;"></div>
<div class="b " style="left:988.00px;top:913.00px;width:891.00px;height:8.00px;background:#808386;"></div>
<div class="b " style="left:1236.00px;top:436.00px;width:1.00px;height:477.00px;background:#1e1e1e;"></div>
<span class="t " style="left:1281.41px;top:411.00px;font-size:21.80px;color:#fff;transform:scaleX(0.9830);">Channel Impulse Response (CIR)</span>
<svg class="b" style="left:1838px;top:407px;width:41px;height:29px" viewBox="1838 407 41 29"><polygon points="1842.6,414 1860.4,414 1851.5,429.2" fill="none" stroke="#e4ecf4" stroke-width="1.3"/><path d="M1869,413 L1886,430 M1869,430 L1886,413" stroke="#de601e" stroke-width="4.6" fill="none"/></svg>
<div class="b " style="left:1003.50px;top:454.25px;width:19.00px;height:19.00px;background:#e2e2e2;border-radius:50%;"></div>
<span class="t " style="left:1028.11px;top:456.00px;font-size:18.90px;color:#fff;transform:scaleX(0.8951);">Freeze</span>
<div class="b " style="left:1110.50px;top:454.25px;width:19.00px;height:19.00px;background:#e2e2e2;border-radius:50%;"></div>
<span class="t " style="left:1135.10px;top:456.00px;font-size:18.90px;color:#fff;transform:scaleX(0.9491);">Gradient</span>
<span class="t " style="left:1010.43px;top:517.00px;font-size:18.90px;color:#fff;transform:scaleX(0.9558);">Smoothing Level</span>
<div class="b " style="left:1013.00px;top:544.00px;width:1.00px;height:6.00px;background:#a4a4a4;"></div>
<div class="b " style="left:1033.00px;top:545.00px;width:1.00px;height:5.00px;background:#a4a4a4;"></div>
<div class="b " style="left:1053.00px;top:545.00px;width:1.00px;height:5.00px;background:#a4a4a4;"></div>
<div class="b " style="left:1072.00px;top:545.00px;width:1.00px;height:5.00px;background:#a4a4a4;"></div>
<div class="b " style="left:1092.00px;top:545.00px;width:1.00px;height:5.00px;background:#a4a4a4;"></div>
<div class="b " style="left:1112.00px;top:545.00px;width:1.00px;height:5.00px;background:#a4a4a4;"></div>
<div class="b " style="left:1131.00px;top:545.00px;width:1.00px;height:5.00px;background:#a4a4a4;"></div>
<div class="b " style="left:1151.00px;top:545.00px;width:1.00px;height:5.00px;background:#a4a4a4;"></div>
<div class="b " style="left:1171.00px;top:545.00px;width:1.00px;height:5.00px;background:#a4a4a4;"></div>
<div class="b " style="left:1190.00px;top:545.00px;width:1.00px;height:5.00px;background:#a4a4a4;"></div>
<div class="b " style="left:1210.00px;top:544.00px;width:1.00px;height:6.00px;background:#a4a4a4;"></div>
<div class="b " style="left:1004.50px;top:559.25px;width:216.00px;height:3.00px;background:#e4e4e4;border-radius:2px;"></div>
<div class="b " style="left:1023.75px;top:551.05px;width:20.00px;height:20.00px;background:radial-gradient(circle at 50% 30%, #f0f0f0 0%, #c4c4c4 35%, #8a8a8a 70%, #555 100%);border-radius:50%;"></div>
<span class="t " style="left:1010.68px;top:598.00px;font-size:18.90px;color:#fff;transform:scaleX(0.9477);">Zoom X</span>
<div class="b " style="left:1004.50px;top:634.25px;width:216.00px;height:3.00px;background:#e4e4e4;border-radius:2px;"></div>
<div class="b " style="left:1004.50px;top:626.05px;width:20.00px;height:20.00px;background:radial-gradient(circle at 50% 30%, #f0f0f0 0%, #c4c4c4 35%, #8a8a8a 70%, #555 100%);border-radius:50%;"></div>
<span class="t " style="left:1010.69px;top:673.00px;font-size:18.90px;color:#fff;transform:scaleX(0.9388);">Zoom Y</span>
<div class="b " style="left:1004.50px;top:709.25px;width:216.00px;height:3.00px;background:#e4e4e4;border-radius:2px;"></div>
<div class="b " style="left:1004.50px;top:701.05px;width:20.00px;height:20.00px;background:radial-gradient(circle at 50% 30%, #f0f0f0 0%, #c4c4c4 35%, #8a8a8a 70%, #555 100%);border-radius:50%;"></div>
<span class="t " style="left:1011.05px;top:749.00px;font-size:18.90px;color:#fff;transform:scaleX(0.9250);">x-Axis</span>
<div class="b " style="left:1020.75px;top:777.50px;width:17.00px;height:17.00px;background:radial-gradient(circle at 50% 40%, #fff 0%, #fff 55%, #cfcfcf 80%, #8a8a8a 100%);border-radius:50%;"></div>
<span class="t " style="left:1046.72px;top:778.00px;font-size:18.90px;color:#fff;transform:scaleX(0.9101);">Samples</span>
<div class="b " style="left:1020.75px;top:807.50px;width:17.00px;height:17.00px;background:radial-gradient(circle at 50% 40%, #fff 0%, #fff 55%, #cfcfcf 80%, #8a8a8a 100%);border-radius:50%;"></div>
<div class="b " style="left:1024.65px;top:811.40px;width:9.20px;height:9.20px;background:radial-gradient(circle at 50% 50%, #7a7a7a 0%, #3a3a3a 45%, #222 100%);border-radius:50%;"></div>
<span class="t " style="left:1046.05px;top:808.00px;font-size:18.90px;color:#fff;transform:scaleX(0.9385);">Distance</span>
<div class="b " style="left:1020.75px;top:837.50px;width:17.00px;height:17.00px;background:radial-gradient(circle at 50% 40%, #fff 0%, #fff 55%, #cfcfcf 80%, #8a8a8a 100%);border-radius:50%;"></div>
<span class="t " style="left:1047.10px;top:838.00px;font-size:18.90px;color:#fff;transform:scaleX(0.9331);">Time</span>
<svg class="b plot" style="left:1237px;top:436px;width:642px;height:477px" viewBox="1237 436 642 477">
<rect x="1360.5" y="465" width="120.79999999999995" height="355" fill="#404040"/>
<path d="M1383.5,465 V820 M1416.5,465 V820 M1448.5,465 V820 M1513.5,465 V820 M1546.5,465 V820 M1578.5,465 V820 M1610.5,465 V820 M1643.5,465 V820 M1675.5,465 V820 M1708.5,465 V820 M1740.5,465 V820 M1773.5,465 V820 M1805.5,465 V820 M1838.5,465 V820 M1360.5,536.5 H1845.3 M1360.5,607.5 H1845.3 M1360.5,678.5 H1845.3 M1360.5,749.5 H1845.3" stroke="#7e7e7e" stroke-width="1" fill="none"/>
<path d="M1360.5,465 H1845.3 V820" fill="none" stroke="#8e8e8e" stroke-width="2"/><path d="M1360.5,820 H1846.3" fill="none" stroke="#9a9a9a" stroke-width="1"/>
<line x1="1481.3" y1="465" x2="1481.3" y2="820" stroke="#e8e84a" stroke-width="1" stroke-dasharray="1.5,1.5"/>
<polyline points="1361.5,819.5 1361.9,764.0 1362.3,784.2 1362.8,808.4 1363.2,819.5 1363.6,819.5 1364.0,818.0 1364.4,777.0 1364.9,783.6 1365.3,766.2 1365.7,763.7 1366.1,819.5 1366.5,809.9 1367.0,801.4 1367.4,819.5 1367.8,801.4 1368.2,780.2 1368.7,819.5 1369.1,819.5 1369.5,766.0 1369.9,800.1 1370.3,773.5 1370.8,781.8 1371.2,791.4 1371.6,757.1 1372.0,796.5 1372.4,767.3 1372.9,784.4 1373.3,777.3 1373.7,804.1 1374.1,785.6 1374.5,781.0 1375.0,769.6 1375.4,819.5 1375.8,780.5 1376.2,755.1 1376.6,811.8 1377.1,785.0 1377.5,819.5 1377.9,803.4 1378.3,819.5 1378.7,810.7 1379.2,790.2 1379.6,783.4 1380.0,769.6 1380.4,791.1 1380.8,762.1 1381.3,819.5 1381.7,803.2 1382.1,803.2 1382.5,772.9 1383.0,781.2 1383.4,811.7 1383.8,789.4 1384.2,756.0 1384.6,781.8 1385.1,799.6 1385.5,803.5 1385.9,765.8 1386.3,758.3 1386.7,819.5 1387.2,802.6 1387.6,776.9 1388.0,819.5 1388.4,785.8 1388.8,800.7 1389.3,810.2 1389.7,819.5 1390.1,812.8 1390.5,800.5 1390.9,781.9 1391.4,806.7 1391.8,819.5 1392.2,797.9 1392.6,784.8 1393.0,763.1 1393.5,774.1 1393.9,780.8 1394.3,794.9 1394.7,791.0 1395.2,784.5 1395.6,785.7 1396.0,756.7 1396.4,798.7 1396.8,759.1 1397.3,759.7 1397.7,812.8 1398.1,784.4 1398.5,819.3 1398.9,772.5 1399.4,766.7 1399.8,765.3 1400.2,797.9 1400.6,798.4 1401.0,765.7 1401.5,818.6 1401.9,805.0 1402.3,819.5 1402.7,819.5 1403.1,803.9 1403.6,799.4 1404.0,819.5 1404.4,781.8 1404.8,815.4 1405.2,781.5 1405.7,760.7 1406.1,819.5 1406.5,787.7 1406.9,780.4 1407.3,766.6 1407.8,782.5 1408.2,800.7 1408.6,762.5 1409.0,818.0 1409.5,797.1 1409.9,780.1 1410.3,783.8 1410.7,756.3 1411.1,761.9 1411.6,793.0 1412.0,811.3 1412.4,802.8 1412.8,819.5 1413.2,819.5 1413.7,809.8 1414.1,782.4 1414.5,803.4 1414.9,798.8 1415.3,819.5 1415.8,797.4 1416.2,756.2 1416.6,780.1 1417.0,788.2 1417.4,763.0 1417.9,816.8 1418.3,816.6 1418.7,782.1 1419.1,766.6 1419.5,781.8 1420.0,819.5 1420.4,793.3 1420.8,807.4 1421.2,819.5 1421.6,777.2 1422.1,778.0 1422.5,819.5 1422.9,775.8 1423.3,814.4 1423.8,768.6 1424.2,799.4 1424.6,755.8 1425.0,791.8 1425.4,784.9 1425.9,804.2 1426.3,767.2 1426.7,766.7 1427.1,806.6 1427.5,765.6 1428.0,761.3 1428.4,801.2 1428.8,819.5 1429.2,769.8 1429.6,774.1 1430.1,750.4 1430.5,784.0 1430.9,793.0 1431.3,778.0 1431.7,819.5 1432.2,789.2 1432.6,765.4 1433.0,819.5 1433.4,814.0 1433.8,782.5 1434.3,806.5 1434.7,819.5 1435.1,819.5 1435.5,799.4 1436.0,771.7 1436.4,799.3 1436.8,809.4 1437.2,819.5 1437.6,808.3 1438.1,782.9 1438.5,799.6 1438.9,798.5 1439.3,764.1 1439.7,804.9 1440.2,775.9 1440.6,819.5 1441.0,812.4 1441.4,791.6 1441.8,770.7 1442.3,772.1 1442.7,813.5 1443.1,782.0 1443.5,786.2 1443.9,772.5 1444.4,743.0 1444.8,777.3 1445.2,782.1 1445.6,785.5 1446.0,777.6 1446.5,819.5 1446.9,794.0 1447.3,769.8 1447.7,808.6 1448.1,780.9 1448.6,747.3 1449.0,760.1 1449.4,777.0 1449.8,814.1 1450.3,768.7 1450.7,760.6 1451.1,791.6 1451.5,786.2 1451.9,772.7 1452.4,772.0 1452.8,777.2 1453.2,789.3 1453.6,809.8 1454.0,784.4 1454.5,791.9 1454.9,819.5 1455.3,757.9 1455.7,819.5 1456.1,787.3 1456.6,771.6 1457.0,768.3 1457.4,765.4 1457.8,777.5 1458.2,771.3 1458.7,765.8 1459.1,819.5 1459.5,791.6 1459.9,790.9 1460.3,758.3 1460.8,790.7 1461.2,819.5 1461.6,786.3 1462.0,801.0 1462.5,802.4 1462.9,791.9 1463.3,778.7 1463.7,819.5 1464.1,783.4 1464.6,819.5 1465.0,789.5 1465.4,766.7 1465.8,819.5 1466.2,809.4 1466.7,797.2 1467.1,801.9 1467.5,779.7 1467.9,819.5 1468.3,800.8 1468.8,762.0 1469.2,787.5 1469.6,783.1 1470.0,800.9 1470.4,783.2 1470.9,816.9 1471.3,807.6 1471.7,764.6 1472.1,776.0 1472.5,811.3 1473.0,787.1 1473.4,762.6 1473.8,783.7 1474.2,786.9 1474.6,787.2 1475.1,801.3 1475.5,778.0 1475.9,768.5 1476.3,777.8 1476.8,788.2 1477.2,806.0 1477.6,774.4 1478.0,801.8 1478.4,800.8 1478.9,760.4 1479.3,747.0 1479.7,720.1 1480.1,693.3 1480.5,666.4 1481.0,639.5 1481.4,622.7 1481.8,649.5 1482.2,676.4 1482.6,703.3 1483.1,730.2 1483.5,757.1 1483.9,783.9 1484.3,803.7 1484.7,802.3 1485.2,768.7 1485.6,748.7 1486.0,782.3 1486.4,764.8 1486.8,819.5 1487.3,819.5 1487.7,807.8 1488.1,786.0 1488.5,768.4 1488.9,742.9 1489.4,783.6 1489.8,819.5 1490.2,797.6 1490.6,788.9 1491.1,770.9 1491.5,787.7 1491.9,780.6 1492.3,819.5 1492.7,768.1 1493.2,800.1 1493.6,801.3 1494.0,749.5 1494.4,802.3 1494.8,778.8 1495.3,788.6 1495.7,809.1 1496.1,794.1 1496.5,777.3 1496.9,791.9 1497.4,804.8 1497.8,752.6 1498.2,763.5 1498.6,750.3 1499.0,789.4 1499.5,785.5 1499.9,793.2 1500.3,809.8 1500.7,767.9 1501.1,797.6 1501.6,797.5 1502.0,814.5 1502.4,811.7 1502.8,772.9 1503.3,784.8 1503.7,817.7 1504.1,769.8 1504.5,770.8 1504.9,809.5 1505.4,788.8 1505.8,803.2 1506.2,788.1 1506.6,806.3 1507.0,753.0 1507.5,790.3 1507.9,817.3 1508.3,817.7 1508.7,790.3 1509.1,819.5 1509.6,819.5 1510.0,756.6 1510.4,819.5 1510.8,819.5 1511.2,760.0 1511.7,770.6 1512.1,775.4 1512.5,789.2 1512.9,762.5 1513.3,808.1 1513.8,803.4 1514.2,796.9 1514.6,815.0 1515.0,819.5 1515.4,768.6 1515.9,819.5 1516.3,787.2 1516.7,819.5 1517.1,796.4 1517.6,814.6 1518.0,819.5 1518.4,756.0 1518.8,790.7 1519.2,790.8 1519.7,816.6 1520.1,793.9 1520.5,765.2 1520.9,801.5 1521.3,792.3 1521.8,799.5 1522.2,809.9 1522.6,805.8 1523.0,819.5 1523.4,819.5 1523.9,783.0 1524.3,768.9 1524.7,816.1 1525.1,772.6 1525.5,769.7 1526.0,758.9 1526.4,789.6 1526.8,817.2 1527.2,814.1 1527.6,819.5 1528.1,791.9 1528.5,772.9 1528.9,815.7 1529.3,819.5 1529.8,815.3 1530.2,803.3 1530.6,818.5 1531.0,819.5 1531.4,772.2 1531.9,819.5 1532.3,819.5 1532.7,802.0 1533.1,819.5 1533.5,784.5 1534.0,776.3 1534.4,794.8 1534.8,785.7 1535.2,815.7 1535.6,819.5 1536.1,794.6 1536.5,819.5 1536.9,765.8 1537.3,819.5 1537.7,764.5 1538.2,819.5 1538.6,777.1 1539.0,819.5 1539.4,784.3 1539.8,783.3 1540.3,819.5 1540.7,819.5 1541.1,773.3 1541.5,775.2 1541.9,762.4 1542.4,777.8 1542.8,763.2 1543.2,800.1 1543.6,780.7 1544.1,819.5 1544.5,770.1 1544.9,761.5 1545.3,771.2 1545.7,782.1 1546.2,804.9 1546.6,760.1 1547.0,819.5 1547.4,774.5 1547.8,766.7 1548.3,772.1 1548.7,816.2 1549.1,775.8 1549.5,773.0 1549.9,802.5 1550.4,768.7 1550.8,819.5 1551.2,819.5 1551.6,819.5 1552.0,786.7 1552.5,771.4 1552.9,794.7 1553.3,781.2 1553.7,785.3 1554.1,768.9 1554.6,819.5 1555.0,768.0 1555.4,759.3 1555.8,806.9 1556.3,786.5 1556.7,816.8 1557.1,754.5 1557.5,787.8 1557.9,775.2 1558.4,798.7 1558.8,791.8 1559.2,808.3 1559.6,763.7 1560.0,762.3 1560.5,774.4 1560.9,781.8 1561.3,819.5 1561.7,793.0 1562.1,777.0 1562.6,794.3 1563.0,787.1 1563.4,780.9 1563.8,795.0 1564.2,819.5 1564.7,765.5 1565.1,793.3 1565.5,778.0 1565.9,819.5 1566.3,784.2 1566.8,774.8 1567.2,771.4 1567.6,815.0 1568.0,816.4 1568.4,819.5 1568.9,788.2 1569.3,793.1 1569.7,752.4 1570.1,775.5 1570.6,785.9 1571.0,774.9 1571.4,817.6 1571.8,779.4 1572.2,794.2 1572.7,789.9 1573.1,795.8 1573.5,771.8 1573.9,819.5 1574.3,778.7 1574.8,794.5 1575.2,799.8 1575.6,818.2 1576.0,793.7 1576.4,819.5 1576.9,819.5 1577.3,792.3 1577.7,777.1 1578.1,787.7 1578.5,785.7 1579.0,780.5 1579.4,797.8 1579.8,765.3 1580.2,768.8 1580.6,780.0 1581.1,778.1 1581.5,789.3 1581.9,772.8 1582.3,774.6 1582.7,799.8 1583.2,819.5 1583.6,797.7 1584.0,784.0 1584.4,811.9 1584.9,819.5 1585.3,819.5 1585.7,796.4 1586.1,769.1 1586.5,800.0 1587.0,819.5 1587.4,804.4 1587.8,790.8 1588.2,778.0 1588.6,764.0 1589.1,788.5 1589.5,818.3 1589.9,771.1 1590.3,783.6 1590.7,794.7 1591.2,768.6 1591.6,790.9 1592.0,773.5 1592.4,797.3 1592.8,772.6 1593.3,817.7 1593.7,785.3 1594.1,775.6 1594.5,819.5 1594.9,814.7 1595.4,819.5 1595.8,786.2 1596.2,764.6 1596.6,819.5 1597.1,783.2 1597.5,774.9 1597.9,795.3 1598.3,794.7 1598.7,786.3 1599.2,782.1 1599.6,777.6 1600.0,787.0 1600.4,813.1 1600.8,794.5 1601.3,819.5 1601.7,772.8 1602.1,819.5 1602.5,775.6 1602.9,750.0 1603.4,774.2 1603.8,819.5 1604.2,794.9 1604.6,786.3 1605.0,788.9 1605.5,775.5 1605.9,816.4 1606.3,760.9 1606.7,762.7 1607.1,717.7 1607.6,684.3 1608.0,733.2 1608.4,770.3 1608.8,819.5 1609.2,773.5 1609.7,786.7 1610.1,762.2 1610.5,755.1 1610.9,819.5 1611.4,757.3 1611.8,813.2 1612.2,798.3 1612.6,806.8 1613.0,776.3 1613.5,811.7 1613.9,773.2 1614.3,768.3 1614.7,784.2 1615.1,793.6 1615.6,761.2 1616.0,775.3 1616.4,768.0 1616.8,795.4 1617.2,769.2 1617.7,766.6 1618.1,775.5 1618.5,768.3 1618.9,819.5 1619.3,795.5 1619.8,773.2 1620.2,778.1 1620.6,787.5 1621.0,769.1 1621.4,768.9 1621.9,763.5 1622.3,781.7 1622.7,819.5 1623.1,781.8 1623.6,766.5 1624.0,753.5 1624.4,775.5 1624.8,789.3 1625.2,776.9 1625.7,819.5 1626.1,787.6 1626.5,777.5 1626.9,811.3 1627.3,819.5 1627.8,800.7 1628.2,810.1 1628.6,819.5 1629.0,819.5 1629.4,777.4 1629.9,775.7 1630.3,794.6 1630.7,794.5 1631.1,806.5 1631.5,817.9 1632.0,754.1 1632.4,803.8 1632.8,795.6 1633.2,779.9 1633.6,765.6 1634.1,772.2 1634.5,776.8 1634.9,789.1 1635.3,758.3 1635.7,819.5 1636.2,766.0 1636.6,809.4 1637.0,758.7 1637.4,759.1 1637.9,790.9 1638.3,793.9 1638.7,784.7 1639.1,781.9 1639.5,747.3 1640.0,773.9 1640.4,764.4 1640.8,804.5 1641.2,790.2 1641.6,777.3 1642.1,791.5 1642.5,778.7 1642.9,757.0 1643.3,802.4 1643.7,819.5 1644.2,819.5 1644.6,774.2 1645.0,815.5 1645.4,768.9 1645.8,777.8 1646.3,791.4 1646.7,793.5 1647.1,773.1 1647.5,772.6 1647.9,816.2 1648.4,789.9 1648.8,769.1 1649.2,774.4 1649.6,819.5 1650.0,792.4 1650.5,819.5 1650.9,765.4 1651.3,819.5 1651.7,765.9 1652.2,768.5 1652.6,802.9 1653.0,819.5 1653.4,782.2 1653.8,793.9 1654.3,800.6 1654.7,781.0 1655.1,819.5 1655.5,759.1 1655.9,782.1 1656.4,819.5 1656.8,761.6 1657.2,819.5 1657.6,789.2 1658.0,799.7 1658.5,797.8 1658.9,793.0 1659.3,819.5 1659.7,793.7 1660.1,799.6 1660.6,795.8 1661.0,796.7 1661.4,783.1 1661.8,802.7 1662.2,780.2 1662.7,766.2 1663.1,785.5 1663.5,768.1 1663.9,784.2 1664.4,813.1 1664.8,780.1 1665.2,790.3 1665.6,810.9 1666.0,790.5 1666.5,819.5 1666.9,787.7 1667.3,780.7 1667.7,790.0 1668.1,770.1 1668.6,810.0 1669.0,812.4 1669.4,819.1 1669.8,769.7 1670.2,753.6 1670.7,765.2 1671.1,819.5 1671.5,808.5 1671.9,783.6 1672.3,814.7 1672.8,761.8 1673.2,801.2 1673.6,797.9 1674.0,764.1 1674.4,768.4 1674.9,773.7 1675.3,806.5 1675.7,795.2 1676.1,807.9 1676.5,797.0 1677.0,787.1 1677.4,796.6 1677.8,792.8 1678.2,819.5 1678.7,819.5 1679.1,819.5 1679.5,819.5 1679.9,770.4 1680.3,764.9 1680.8,781.6 1681.2,772.7 1681.6,783.5 1682.0,773.5 1682.4,793.0 1682.9,780.0 1683.3,767.0 1683.7,807.8 1684.1,787.9 1684.5,753.6 1685.0,779.3 1685.4,785.0 1685.8,773.7 1686.2,765.1 1686.6,785.4 1687.1,808.1 1687.5,781.6 1687.9,753.4 1688.3,760.3 1688.7,769.0 1689.2,757.6 1689.6,780.6 1690.0,790.2 1690.4,773.4 1690.9,766.2 1691.3,757.8 1691.7,802.6 1692.1,785.9 1692.5,782.8 1693.0,776.1 1693.4,789.4 1693.8,774.3 1694.2,761.9 1694.6,779.3 1695.1,793.9 1695.5,795.8 1695.9,769.0 1696.3,787.1 1696.7,771.3 1697.2,819.5 1697.6,773.8 1698.0,762.5 1698.4,767.9 1698.8,793.0 1699.3,819.5 1699.7,776.3 1700.1,759.8 1700.5,817.2 1700.9,775.0 1701.4,765.5 1701.8,785.1 1702.2,752.6 1702.6,802.1 1703.0,798.5 1703.5,819.5 1703.9,783.8 1704.3,806.6 1704.7,805.1 1705.2,788.3 1705.6,796.7 1706.0,753.9 1706.4,819.5 1706.8,755.1 1707.3,762.5 1707.7,819.5 1708.1,771.4 1708.5,784.6 1708.9,819.5 1709.4,815.5 1709.8,802.7 1710.2,804.7 1710.6,752.2 1711.0,790.8 1711.5,819.5 1711.9,779.2 1712.3,799.5 1712.7,819.5 1713.1,808.3 1713.6,756.6 1714.0,819.5 1714.4,791.2 1714.8,764.4 1715.2,773.6 1715.7,802.5 1716.1,793.2 1716.5,773.8 1716.9,812.2 1717.4,807.0 1717.8,790.1 1718.2,767.4 1718.6,784.0 1719.0,819.5 1719.5,767.6 1719.9,783.8 1720.3,773.0 1720.7,788.2 1721.1,810.8 1721.6,782.2 1722.0,772.6 1722.4,761.5 1722.8,819.5 1723.2,775.4 1723.7,770.3 1724.1,798.0 1724.5,784.4 1724.9,819.5 1725.3,784.6 1725.8,788.2 1726.2,801.3 1726.6,787.8 1727.0,819.5 1727.4,819.5 1727.9,819.5 1728.3,763.1 1728.7,795.9 1729.1,805.6 1729.5,819.5 1730.0,798.0 1730.4,819.5 1730.8,814.7 1731.2,777.8 1731.7,778.8 1732.1,819.5 1732.5,764.9 1732.9,753.0 1733.3,777.0 1733.8,752.9 1734.2,819.5 1734.6,779.1 1735.0,799.0 1735.4,819.5 1735.9,775.3 1736.3,766.6 1736.7,765.0 1737.1,819.5 1737.5,791.2 1738.0,783.7 1738.4,763.3 1738.8,782.3 1739.2,758.0 1739.6,776.3 1740.1,789.4 1740.5,783.4 1740.9,756.1 1741.3,791.9 1741.7,818.2 1742.2,819.5 1742.6,782.9 1743.0,814.8 1743.4,819.5 1743.8,813.6 1744.3,774.6 1744.7,785.0 1745.1,774.8 1745.5,794.5 1746.0,788.8 1746.4,776.8 1746.8,753.6 1747.2,776.3 1747.6,808.1 1748.1,813.2 1748.5,757.0 1748.9,790.6 1749.3,781.2 1749.7,784.0 1750.2,773.5 1750.6,764.8 1751.0,786.6 1751.4,810.8 1751.8,806.7 1752.3,798.0 1752.7,800.3 1753.1,794.4 1753.5,787.8 1753.9,798.4 1754.4,792.0 1754.8,777.3 1755.2,762.2 1755.6,795.0 1756.0,798.4 1756.5,792.6 1756.9,780.7 1757.3,804.2 1757.7,774.7 1758.2,783.6 1758.6,794.4 1759.0,785.8 1759.4,777.3 1759.8,781.0 1760.3,792.5 1760.7,819.5 1761.1,795.6 1761.5,777.5 1761.9,771.5 1762.4,797.4 1762.8,819.5 1763.2,797.9 1763.6,786.7 1764.0,777.9 1764.5,759.6 1764.9,819.2 1765.3,807.2 1765.7,766.0 1766.1,819.5 1766.6,804.4 1767.0,778.5 1767.4,803.3 1767.8,793.8 1768.2,779.6 1768.7,769.0 1769.1,754.0 1769.5,800.8 1769.9,803.8 1770.3,771.7 1770.8,811.9 1771.2,807.9 1771.6,780.4 1772.0,818.7 1772.5,777.1 1772.9,786.0 1773.3,819.5 1773.7,781.8 1774.1,770.1 1774.6,792.7 1775.0,801.2 1775.4,794.9 1775.8,815.1 1776.2,766.4 1776.7,755.2 1777.1,804.9 1777.5,819.5 1777.9,762.5 1778.3,819.5 1778.8,819.5 1779.2,788.0 1779.6,797.1 1780.0,770.8 1780.4,759.1 1780.9,819.5 1781.3,761.8 1781.7,772.8 1782.1,809.7 1782.5,791.2 1783.0,819.5 1783.4,814.2 1783.8,778.9 1784.2,819.5 1784.7,800.8 1785.1,779.9 1785.5,768.8 1785.9,747.1 1786.3,746.0 1786.8,800.4 1787.2,819.5 1787.6,771.8 1788.0,784.7 1788.4,781.6 1788.9,753.4 1789.3,815.8 1789.7,800.8 1790.1,819.5 1790.5,798.9 1791.0,808.0 1791.4,757.1 1791.8,791.6 1792.2,778.6 1792.6,819.5 1793.1,780.7 1793.5,789.1 1793.9,764.7 1794.3,808.5 1794.7,744.5 1795.2,762.8 1795.6,762.4 1796.0,762.4 1796.4,813.6 1796.8,765.7 1797.3,767.9 1797.7,801.9 1798.1,783.1 1798.5,780.2 1799.0,775.3 1799.4,819.5 1799.8,819.5 1800.2,819.5 1800.6,819.5 1801.1,814.5 1801.5,814.9 1801.9,777.3 1802.3,778.3 1802.7,753.7 1803.2,783.4 1803.6,818.3 1804.0,764.8 1804.4,811.1 1804.8,819.5 1805.3,798.5 1805.7,819.5 1806.1,793.0 1806.5,799.0 1806.9,819.5 1807.4,780.2 1807.8,771.5 1808.2,768.0 1808.6,775.0 1809.0,795.9 1809.5,791.5 1809.9,819.5 1810.3,777.0 1810.7,786.9 1811.1,778.8 1811.6,819.5 1812.0,748.9 1812.4,756.0 1812.8,775.1 1813.3,819.5 1813.7,800.6 1814.1,810.4 1814.5,778.4 1814.9,782.0 1815.4,795.1 1815.8,781.9 1816.2,801.7 1816.6,763.5 1817.0,792.3 1817.5,819.5 1817.9,819.5 1818.3,779.9 1818.7,778.5 1819.1,776.5 1819.6,819.5 1820.0,819.5 1820.4,819.5 1820.8,813.7 1821.2,774.0 1821.7,776.0 1822.1,795.8 1822.5,809.6 1822.9,750.4 1823.3,819.5 1823.8,819.5 1824.2,799.7 1824.6,802.4 1825.0,789.6 1825.5,790.5 1825.9,763.8 1826.3,786.0 1826.7,798.1 1827.1,819.5 1827.6,772.3 1828.0,804.9 1828.4,804.5 1828.8,818.2 1829.2,799.0 1829.7,812.9 1830.1,815.6 1830.5,780.4 1830.9,747.3 1831.3,800.7 1831.8,773.4 1832.2,780.6 1832.6,819.5 1833.0,761.9 1833.4,819.5 1833.9,790.5 1834.3,819.5 1834.7,810.9 1835.1,794.1 1835.5,813.6 1836.0,746.2 1836.4,819.5 1836.8,780.1 1837.2,775.5 1837.6,797.6 1838.1,752.6 1838.5,779.1 1838.9,772.7 1839.3,759.9 1839.8,781.8 1840.2,779.0 1840.6,779.5 1841.0,810.2 1841.4,782.9 1841.9,778.5 1842.3,789.2 1842.7,819.1 1843.1,819.5 1843.5,784.3 1844.0,760.8 1844.4,802.9 1844.8,768.3" fill="none" stroke="#f2f2f2" stroke-width="1" stroke-linejoin="bevel"/>
<line x1="1481.4" y1="617" x2="1481.4" y2="705" stroke="#eeee48" stroke-width="1.2"/>
<polygon points="1478.4,768 1480.0,736 1480.8,703 1481.9,703 1482.7,736 1484.6,768" fill="#f0f0e4"/><line x1="1481.4" y1="700" x2="1481.4" y2="748" stroke="#eeee48" stroke-width="1"/>
<polygon points="1606.0,768 1606.8,742 1607.1,676 1608.0,676 1608.3,742 1609.2,768" fill="#ededed"/>
<line x1="1360.5" y1="464" x2="1360.5" y2="821" stroke="#d8574a" stroke-width="1.6"/>
<circle cx="1481.3" cy="617.5" r="5.8" fill="#f4f41e"/>
<circle cx="1607.5" cy="704.3" r="5.8" fill="#e00a12"/>
<g fill="#fff" font-size="20" text-anchor="end">
<text x="1351" y="472.2">-10.0</text>
<text x="1351" y="543.2">-20.0</text>
<text x="1351" y="614.2">-30.0</text>
<text x="1351" y="685.4">-40.0</text>
<text x="1351" y="756.7">-50.0</text>
<text x="1351" y="827.4">-60.0</text>
</g><g fill="#fff" font-size="14.1" text-anchor="middle">
<text x="1383.6" y="840.6">-60</text>
<text x="1416.0" y="861">-40</text>
<text x="1448.3" y="840.6">-20</text>
<text x="1480.7" y="861">0</text>
<text x="1513.1" y="840.6">20</text>
<text x="1545.4" y="861">40</text>
<text x="1577.8" y="840.6">60</text>
<text x="1610.2" y="861">80</text>
<text x="1642.6" y="840.6">100</text>
<text x="1674.9" y="861">120</text>
<text x="1707.3" y="840.6">140</text>
<text x="1739.7" y="861">160</text>
<text x="1772.0" y="840.6">180</text>
<text x="1804.4" y="861">200</text>
<text x="1836.8" y="840.6">220</text>
</g>
<text x="1603" y="888.5" fill="#fff" font-size="20" text-anchor="middle">Distance Difference (km)</text>
<text transform="translate(1281,642.5) rotate(-90)" fill="#fff" font-size="20" text-anchor="middle">Magnitude (dB)</text>
</svg>
</div></body></html>
